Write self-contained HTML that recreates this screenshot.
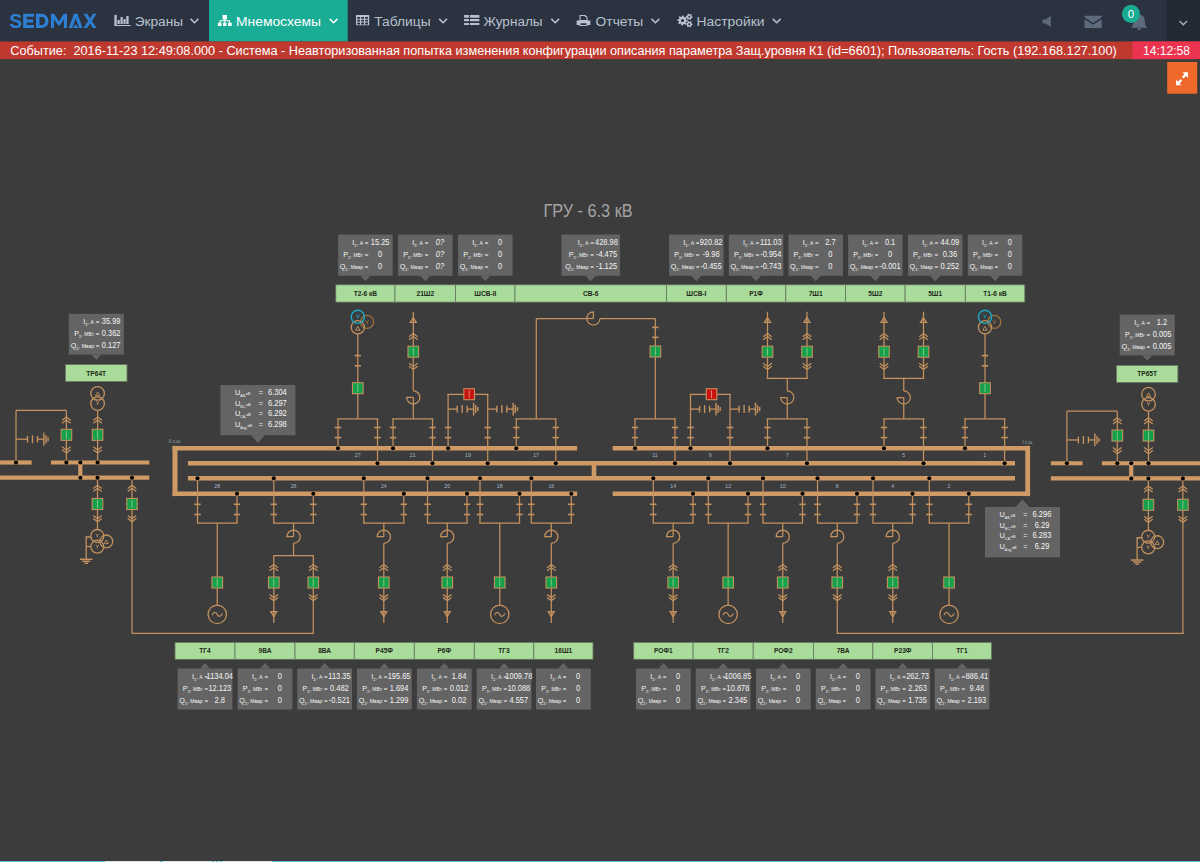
<!DOCTYPE html>
<html><head><meta charset="utf-8">
<style>
html,body{margin:0;padding:0;width:1200px;height:862px;overflow:hidden;background:#3c3c3c;}
svg#d{position:absolute;left:0;top:0;}
</style></head><body>
<svg id="d" width="1200" height="862" viewBox="0 0 1200 862" font-family="Liberation Sans, sans-serif">
<rect x="0" y="0" width="1200" height="41.5" fill="#2a333f"/>
<rect x="1166.5" y="0" width="33.5" height="41.5" fill="#232a35"/>
<rect x="209" y="0" width="138.7" height="41.5" fill="#1aad95"/>
<text x="9.4" y="28" font-size="19.4" font-weight="bold" fill="#2d7fd3" transform="translate(9.4,0) scale(0.97,1) translate(-9.4,0)">S</text>
<path d="M23.2,13.8 h10.8 v3 h-7.3 v2.8 h6.4 v2.8 h-6.4 v2.6 h7.3 v3 h-10.8 Z" fill="#2d7fd3"/>
<path fill-rule="evenodd" d="M36,13.8 h5.8 a6.8,7.1 0 0 1 0,14.2 h-5.8 Z M39.5,16.9 h2.2 a3.4,4 0 0 1 0,8 h-2.2 Z" fill="#2d7fd3"/>
<path d="M50.9,28 V13.8 h3.3 l4.8,7.8 l4.8,-7.8 h3.2 V28 h-3.1 V19.2 l-4.1,6.2 h-1.6 l-4.2,-6.2 V28 Z" fill="#2d7fd3"/>
<path d="M68.8,28 L74,13.8 h3.4 L82.6,28 h-3.5 L75.7,18.3 L72.3,28 Z M72.9,28 L75.7,24.2 L78.5,28 Z" fill="#2d7fd3"/>
<path d="M83.4,13.8 h3.7 l2.9,4.6 l2.9,-4.6 h3.6 l-4.7,7.1 l4.7,7.1 h-3.6 l-2.9,-4.6 l-2.9,4.6 h-3.7 l4.8,-7.1 Z" fill="#2d7fd3"/>
<text x="134.7" y="25.6" font-size="13.7" fill="#b9c2ce" textLength="48.3" lengthAdjust="spacingAndGlyphs">Экраны</text>
<polyline points="190.6,18.9 194.5,22.7 198.4,18.9" fill="none" stroke="#b9c2ce" stroke-width="1.5"/>
<text x="236" y="25.6" font-size="13.7" fill="#ffffff" textLength="85" lengthAdjust="spacingAndGlyphs">Мнемосхемы</text>
<polyline points="329.7,18.9 333.59999999999997,22.7 337.5,18.9" fill="none" stroke="#ffffff" stroke-width="1.5"/>
<text x="374.2" y="25.6" font-size="13.7" fill="#b9c2ce" textLength="56.4" lengthAdjust="spacingAndGlyphs">Таблицы</text>
<polyline points="439.2,18.9 443.09999999999997,22.7 447.0,18.9" fill="none" stroke="#b9c2ce" stroke-width="1.5"/>
<text x="483.4" y="25.6" font-size="13.7" fill="#b9c2ce" textLength="59.2" lengthAdjust="spacingAndGlyphs">Журналы</text>
<polyline points="551.3,18.9 555.1999999999999,22.7 559.0999999999999,18.9" fill="none" stroke="#b9c2ce" stroke-width="1.5"/>
<text x="595.6" y="25.6" font-size="13.7" fill="#b9c2ce" textLength="47.7" lengthAdjust="spacingAndGlyphs">Отчеты</text>
<polyline points="651.5,18.9 655.4,22.7 659.3,18.9" fill="none" stroke="#b9c2ce" stroke-width="1.5"/>
<text x="696.6" y="25.6" font-size="13.7" fill="#b9c2ce" textLength="68" lengthAdjust="spacingAndGlyphs">Настройки</text>
<polyline points="772.8,18.9 776.6999999999999,22.7 780.5999999999999,18.9" fill="none" stroke="#b9c2ce" stroke-width="1.5"/>
<path d="M114.4,15 h2.3 v9.9 h14 v1.1 h-16.3 Z M117.5,20 h2.3 v4 h-2.3 Z M120.5,17 h2.2 v7 h-2.2 Z M123.5,19 h2.1 v5 h-2.1 Z M126.3,16 h2.3 v8 h-2.3 Z" fill="#b9c2ce"/>
<path d="M222.5,15.1 h4.5 v4.4 h-4.5 Z M224.3,19.5 h1 v1.3 h-1 Z M219.6,20.3 h10.3 v1 h-10.3 Z M219.6,20.3 h1 v2.5 h-1 Z M224.3,20.3 h1 v2.5 h-1 Z M228.9,20.3 h1 v2.5 h-1 Z M217.9,22.8 h3.6 v3.2 h-3.6 Z M223,22.8 h3.5 v3.2 h-3.5 Z M228.1,22.8 h3.6 v3.2 h-3.6 Z" fill="#ffffff"/>
<path fill-rule="evenodd" d="M356,14.9 h13.2 v10.35 h-13.2 Z M357.2,16.9 v1.8 h2.8 v-1.8 Z M361.2,16.9 v1.8 h2.8 v-1.8 Z M365.2,16.9 v1.8 h2.8 v-1.8 Z M357.2,19.8 v1.8 h2.8 v-1.8 Z M361.2,19.8 v1.8 h2.8 v-1.8 Z M365.2,19.8 v1.8 h2.8 v-1.8 Z M357.2,22.6 v1.8 h2.8 v-1.8 Z M361.2,22.6 v1.8 h2.8 v-1.8 Z M365.2,22.6 v1.8 h2.8 v-1.8 Z" fill="#b9c2ce"/>
<path d="M464.1,14.9 h4.8 v2.85 h-4.8 Z M469.9,14.9 h9.5 v2.85 h-9.5 Z M464.1,18.9 h4.8 v2.4 h-4.8 Z M469.9,18.9 h9.5 v2.4 h-9.5 Z M464.1,22.9 h4.8 v2.2 h-4.8 Z M469.9,22.9 h9.5 v2.2 h-9.5 Z" fill="#b9c2ce"/>
<path fill-rule="evenodd" d="M579.5,14.9 h6 l2,2 v3.6 h2.9 v4.5 h-2.9 v1 h-8 v-1 h-2.9 v-4.5 h2.9 Z M580.6,16 v4.1 h5.8 v-3 h-1.6 v-1.1 Z M580.6,23.3 v1.7 h5.8 v-1.7 Z" fill="#b9c2ce"/>
<path fill-rule="evenodd" d="M687.70,20.50 L687.60,21.51 L685.96,21.93 L685.61,22.58 L686.18,24.18 L685.39,24.82 L683.93,23.96 L683.23,24.17 L682.50,25.70 L681.49,25.60 L681.07,23.96 L680.42,23.61 L678.82,24.18 L678.18,23.39 L679.04,21.93 L678.83,21.23 L677.30,20.50 L677.40,19.49 L679.04,19.07 L679.39,18.42 L678.82,16.82 L679.61,16.18 L681.07,17.04 L681.77,16.83 L682.50,15.30 L683.51,15.40 L683.93,17.04 L684.58,17.39 L686.18,16.82 L686.82,17.61 L685.96,19.07 L686.17,19.77 Z M684.1,20.5 A1.6,1.6 0 1 0 680.9,20.5 A1.6,1.6 0 1 0 684.1,20.5 Z M692.60,16.80 L692.49,17.65 L691.36,17.99 L690.98,18.48 L690.95,19.66 L690.15,19.99 L689.30,19.18 L688.69,19.10 L687.65,19.66 L686.97,19.13 L687.24,17.99 L687.00,17.41 L686.00,16.80 L686.11,15.95 L687.24,15.61 L687.62,15.12 L687.65,13.94 L688.45,13.61 L689.30,14.42 L689.91,14.50 L690.95,13.94 L691.63,14.47 L691.36,15.61 L691.60,16.19 Z M690.3,16.8 A1.0,1.0 0 1 0 688.3,16.8 A1.0,1.0 0 1 0 690.3,16.8 Z M692.60,24.20 L692.49,25.05 L691.36,25.39 L690.98,25.88 L690.95,27.06 L690.15,27.39 L689.30,26.58 L688.69,26.50 L687.65,27.06 L686.97,26.53 L687.24,25.39 L687.00,24.81 L686.00,24.20 L686.11,23.35 L687.24,23.01 L687.62,22.52 L687.65,21.34 L688.45,21.01 L689.30,21.82 L689.91,21.90 L690.95,21.34 L691.63,21.87 L691.36,23.01 L691.60,23.59 Z M690.3,24.2 A1.0,1.0 0 1 0 688.3,24.2 A1.0,1.0 0 1 0 690.3,24.2 Z" fill="#b9c2ce"/>
<path d="M1042.6,19.5 h2.8 l5.4,-3.5 v11 l-5.4,-3.5 h-2.8 Z" fill="#5d6a7b"/>
<path d="M1084.5,15.7 h17.2 v1.6 l-8.6,5.6 l-8.6,-5.6 Z M1084.5,19.3 l8.6,5.4 l8.6,-5.4 v8.8 h-17.2 Z" fill="#5d6a7b"/>
<path d="M1139.2,14.6 c-3.6,0 -5.6,3 -5.6,6.5 c0,3.5 -1.2,5.4 -2.3,6.6 h15.8 c-1.1,-1.2 -2.3,-3.1 -2.3,-6.6 c0,-3.5 -2,-6.5 -5.6,-6.5 Z M1137.3,28.3 a1.9,1.9 0 0 0 3.8,0 Z" fill="#5d6a7b"/>
<circle cx="1131" cy="13.9" r="9.1" fill="#1aab93"/>
<text x="1131" y="18" font-size="11.5" fill="#ffffff" text-anchor="middle">0</text>
<polyline points="1179.6,21 1183.3,24.7 1187,21" fill="none" stroke="#aab4c2" stroke-width="1.4"/>
<rect x="0" y="41.5" width="1200" height="17.6" fill="#c0392f"/>
<rect x="1132.5" y="41.5" width="67.5" height="17.6" fill="#ec3350"/>
<text x="10.3" y="55.2" font-size="12.6" fill="#ffffff" textLength="1106.4" lengthAdjust="spacingAndGlyphs" xml:space="preserve">Событие:  2016-11-23 12:49:08.000 - Система - Неавторизованная попытка изменения конфигурации описания параметра Защ.уровня К1 (id=6601); Пользователь: Гость (192.168.127.100)</text>
<text x="1143" y="55.2" font-size="12.4" fill="#ffffff" textLength="47" lengthAdjust="spacingAndGlyphs">14:12:58</text>
<rect x="1167.2" y="62" width="30" height="31.7" fill="#f0692a"/>
<path d="M1182.5,72.3 h5.5 v5.5 l-1.9,-1.9 l-2.6,2.6 l-1.7,-1.7 l2.6,-2.6 Z M1181.5,85.3 h-5.5 v-5.5 l1.9,1.9 l2.6,-2.6 l1.7,1.7 l-2.6,2.6 Z" fill="#ffffff"/>
<rect x="0" y="861" width="1200" height="1" fill="#5bbfd6"/>
<rect x="105" y="861" width="55" height="1" fill="#d8e6ea"/>
<rect x="163" y="861" width="49" height="1" fill="#d8e6ea"/>
<rect x="214" y="861" width="2" height="1" fill="#d8e6ea"/>
<rect x="218" y="861" width="2" height="1" fill="#d8e6ea"/>
<rect x="222" y="861" width="50" height="1" fill="#d8e6ea"/>
<line x1="172.6" y1="448.2" x2="577.1" y2="448.2" stroke="#cf9a66" stroke-width="4.6"/>
<line x1="175" y1="445.9" x2="175" y2="496.1" stroke="#cf9a66" stroke-width="5"/>
<line x1="172.6" y1="493.8" x2="577.1" y2="493.8" stroke="#cf9a66" stroke-width="4.6"/>
<line x1="612.7" y1="448.2" x2="1030" y2="448.2" stroke="#cf9a66" stroke-width="4.6"/>
<line x1="1027.7" y1="445.9" x2="1027.7" y2="496.1" stroke="#cf9a66" stroke-width="4.8"/>
<line x1="612.7" y1="493.8" x2="1030" y2="493.8" stroke="#cf9a66" stroke-width="4.6"/>
<line x1="187.9" y1="463.3" x2="1015" y2="463.3" stroke="#cf9a66" stroke-width="4.6"/>
<line x1="187.9" y1="478.3" x2="1015" y2="478.3" stroke="#cf9a66" stroke-width="4.6"/>
<line x1="594" y1="463.3" x2="594" y2="478.3" stroke="#cf9a66" stroke-width="4.6"/>
<text x="175" y="443" font-size="4.6" fill="#9aa6b0" text-anchor="middle" font-weight="normal" font-style="normal">II с.ш.</text>
<text x="1028" y="443.5" font-size="4.6" fill="#9aa6b0" text-anchor="middle" font-weight="normal" font-style="normal">I с.ш.</text>
<line x1="338" y1="418.8" x2="338" y2="448.2" stroke="#c4915f" stroke-width="1.25"/>
<line x1="377.5" y1="418.8" x2="377.5" y2="463.3" stroke="#c4915f" stroke-width="1.25"/>
<line x1="337.3" y1="418.8" x2="378.2" y2="418.8" stroke="#c4915f" stroke-width="1.25"/>
<line x1="334.8" y1="427.5" x2="341.2" y2="427.5" stroke="#c4915f" stroke-width="1.6"/>
<line x1="374.3" y1="427.5" x2="380.7" y2="427.5" stroke="#c4915f" stroke-width="1.6"/>
<line x1="334.8" y1="437.6" x2="341.2" y2="437.6" stroke="#c4915f" stroke-width="1.6"/>
<line x1="374.3" y1="437.6" x2="380.7" y2="437.6" stroke="#c4915f" stroke-width="1.6"/>
<text x="357.75" y="456.8" font-size="5.2" fill="#a9b8c9" text-anchor="middle" font-weight="normal" font-style="normal">27</text>
<line x1="357.8" y1="333.9" x2="357.8" y2="418.8" stroke="#c4915f" stroke-width="1.25"/>
<line x1="354.6" y1="355.6" x2="361.0" y2="355.6" stroke="#c4915f" stroke-width="1.6"/>
<line x1="354.6" y1="365.8" x2="361.0" y2="365.8" stroke="#c4915f" stroke-width="1.6"/>
<rect x="352.5" y="382.7" width="10.6" height="11" fill="#15a04b" stroke="#c4915f" stroke-width="1.1"/>
<line x1="357.8" y1="384.2" x2="357.8" y2="392.2" stroke="#9fcf8a" stroke-width="0.8"/>
<circle cx="367.1" cy="321.9" r="6.5" fill="none" stroke="#9c703f" stroke-width="1.3"/>
<polyline points="365.40000000000003,320.47 367.1,322 368.8,320.47" fill="none" stroke="#9c703f" stroke-width="1.0"/>
<line x1="367.1" y1="322" x2="367.1" y2="323.87" stroke="#9c703f" stroke-width="1.0"/>
<circle cx="357.8" cy="327.3" r="6.6" fill="none" stroke="#c4915f" stroke-width="1.3"/>
<path d="M357.8,326.3 L360.1,330.3 L355.5,330.3 Z" fill="none" stroke="#c4915f" stroke-width="0.9"/>
<circle cx="357.8" cy="316.8" r="6.6" fill="none" stroke="#1ba8c6" stroke-width="1.4"/>
<polyline points="356.1,314.97 357.8,316.5 359.5,314.97" fill="none" stroke="#1ba8c6" stroke-width="1.0"/>
<line x1="357.8" y1="316.5" x2="357.8" y2="318.37" stroke="#1ba8c6" stroke-width="1.0"/>
<line x1="393" y1="418.8" x2="393" y2="448.2" stroke="#c4915f" stroke-width="1.25"/>
<line x1="432.5" y1="418.8" x2="432.5" y2="463.3" stroke="#c4915f" stroke-width="1.25"/>
<line x1="392.3" y1="418.8" x2="433.2" y2="418.8" stroke="#c4915f" stroke-width="1.25"/>
<line x1="389.8" y1="427.5" x2="396.2" y2="427.5" stroke="#c4915f" stroke-width="1.6"/>
<line x1="429.3" y1="427.5" x2="435.7" y2="427.5" stroke="#c4915f" stroke-width="1.6"/>
<line x1="389.8" y1="437.6" x2="396.2" y2="437.6" stroke="#c4915f" stroke-width="1.6"/>
<line x1="429.3" y1="437.6" x2="435.7" y2="437.6" stroke="#c4915f" stroke-width="1.6"/>
<text x="412.75" y="456.8" font-size="5.2" fill="#a9b8c9" text-anchor="middle" font-weight="normal" font-style="normal">21</text>
<path d="M413.3,390.79999999999995 A6.6,6.6 0 1 1 406.7,397.4 L413.3,397.4" fill="none" stroke="#c4915f" stroke-width="1.25"/>
<line x1="413.3" y1="397.4" x2="413.3" y2="418.8" stroke="#c4915f" stroke-width="1.25"/>
<line x1="413.3" y1="311.7" x2="413.3" y2="390.8" stroke="#c4915f" stroke-width="1.25"/>
<path d="M413.3,317.5 L416.40000000000003,322.5 L410.2,322.5 Z" fill="#c4915f" fill-opacity="0.35" stroke="#c4915f" stroke-width="1.2"/>
<polyline points="409.0,336.8 413.3,333.6 417.6,336.8" fill="none" stroke="#c4915f" stroke-width="1.3"/>
<polyline points="409.0,339.8 413.3,336.6 417.6,339.8" fill="none" stroke="#c4915f" stroke-width="1.3"/>
<rect x="408.0" y="346.2" width="10.6" height="11" fill="#15a04b" stroke="#c4915f" stroke-width="1.1"/>
<line x1="413.3" y1="347.7" x2="413.3" y2="355.7" stroke="#9fcf8a" stroke-width="0.8"/>
<polyline points="409.0,363.3 413.3,366.5 417.6,363.3" fill="none" stroke="#c4915f" stroke-width="1.3"/>
<polyline points="409.0,366.3 413.3,369.5 417.6,366.3" fill="none" stroke="#c4915f" stroke-width="1.3"/>
<line x1="448.1" y1="394.3" x2="448.1" y2="448.2" stroke="#c4915f" stroke-width="1.25"/>
<line x1="487.7" y1="394.3" x2="487.7" y2="463.3" stroke="#c4915f" stroke-width="1.25"/>
<line x1="447.40000000000003" y1="394.3" x2="488.4" y2="394.3" stroke="#c4915f" stroke-width="1.25"/>
<line x1="444.90000000000003" y1="427.5" x2="451.3" y2="427.5" stroke="#c4915f" stroke-width="1.6"/>
<line x1="484.5" y1="427.5" x2="490.9" y2="427.5" stroke="#c4915f" stroke-width="1.6"/>
<line x1="444.90000000000003" y1="437.6" x2="451.3" y2="437.6" stroke="#c4915f" stroke-width="1.6"/>
<line x1="484.5" y1="437.6" x2="490.9" y2="437.6" stroke="#c4915f" stroke-width="1.6"/>
<rect x="463.9" y="388.7" width="10.6" height="11" fill="#c8120f" stroke="#c4915f" stroke-width="1.1"/>
<line x1="469.2" y1="390.2" x2="469.2" y2="398.2" stroke="#e8a090" stroke-width="0.8"/>
<line x1="448.1" y1="409.1" x2="457.20000000000005" y2="409.1" stroke="#c4915f" stroke-width="1.3"/>
<line x1="457.20000000000005" y1="405.8" x2="457.20000000000005" y2="412.40000000000003" stroke="#c4915f" stroke-width="1.4"/>
<line x1="462.20000000000005" y1="405.1" x2="462.20000000000005" y2="413.1" stroke="#c4915f" stroke-width="1.4"/>
<line x1="467.20000000000005" y1="405.8" x2="467.20000000000005" y2="412.40000000000003" stroke="#c4915f" stroke-width="1.4"/>
<line x1="467.20000000000005" y1="409.1" x2="473.6" y2="409.1" stroke="#c4915f" stroke-width="1.3"/>
<line x1="473.6" y1="402.70000000000005" x2="473.6" y2="415.5" stroke="#c4915f" stroke-width="1.4"/>
<line x1="475.70000000000005" y1="405.1" x2="475.70000000000005" y2="413.1" stroke="#c4915f" stroke-width="1.4"/>
<line x1="477.8" y1="407.1" x2="477.8" y2="411.1" stroke="#c4915f" stroke-width="1.4"/>
<line x1="487.7" y1="409.1" x2="496.8" y2="409.1" stroke="#c4915f" stroke-width="1.3"/>
<line x1="496.8" y1="405.8" x2="496.8" y2="412.40000000000003" stroke="#c4915f" stroke-width="1.4"/>
<line x1="501.8" y1="405.1" x2="501.8" y2="413.1" stroke="#c4915f" stroke-width="1.4"/>
<line x1="506.8" y1="405.8" x2="506.8" y2="412.40000000000003" stroke="#c4915f" stroke-width="1.4"/>
<line x1="506.8" y1="409.1" x2="513.2" y2="409.1" stroke="#c4915f" stroke-width="1.3"/>
<line x1="513.2" y1="402.70000000000005" x2="513.2" y2="415.5" stroke="#c4915f" stroke-width="1.4"/>
<line x1="515.3" y1="405.1" x2="515.3" y2="413.1" stroke="#c4915f" stroke-width="1.4"/>
<line x1="517.4" y1="407.1" x2="517.4" y2="411.1" stroke="#c4915f" stroke-width="1.4"/>
<text x="467.9" y="456.8" font-size="5.2" fill="#a9b8c9" text-anchor="middle" font-weight="normal" font-style="normal">19</text>
<line x1="516.3" y1="418.8" x2="516.3" y2="448.2" stroke="#c4915f" stroke-width="1.25"/>
<line x1="555.8" y1="418.8" x2="555.8" y2="463.3" stroke="#c4915f" stroke-width="1.25"/>
<line x1="515.5999999999999" y1="418.8" x2="556.5" y2="418.8" stroke="#c4915f" stroke-width="1.25"/>
<line x1="513.0999999999999" y1="427.5" x2="519.5" y2="427.5" stroke="#c4915f" stroke-width="1.6"/>
<line x1="552.5999999999999" y1="427.5" x2="559.0" y2="427.5" stroke="#c4915f" stroke-width="1.6"/>
<line x1="513.0999999999999" y1="437.6" x2="519.5" y2="437.6" stroke="#c4915f" stroke-width="1.6"/>
<line x1="552.5999999999999" y1="437.6" x2="559.0" y2="437.6" stroke="#c4915f" stroke-width="1.6"/>
<text x="536.05" y="456.8" font-size="5.2" fill="#a9b8c9" text-anchor="middle" font-weight="normal" font-style="normal">17</text>
<line x1="536.3" y1="318.5" x2="536.3" y2="418.8" stroke="#c4915f" stroke-width="1.25"/>
<line x1="536.3" y1="318.5" x2="586.8" y2="318.5" stroke="#c4915f" stroke-width="1.25"/>
<path d="M600.0,318.5 A6.6,6.6 0 1 1 593.4,311.9 L593.4,318.5" fill="none" stroke="#c4915f" stroke-width="1.25"/>
<line x1="593.4" y1="318.5" x2="586.8" y2="318.5" stroke="#c4915f" stroke-width="1.25"/>
<line x1="600" y1="318.5" x2="655.3" y2="318.5" stroke="#c4915f" stroke-width="1.25"/>
<line x1="655.3" y1="318.5" x2="655.3" y2="418.8" stroke="#c4915f" stroke-width="1.25"/>
<line x1="652.0999999999999" y1="327.4" x2="658.5" y2="327.4" stroke="#c4915f" stroke-width="1.6"/>
<line x1="652.0999999999999" y1="337.4" x2="658.5" y2="337.4" stroke="#c4915f" stroke-width="1.6"/>
<rect x="650.1" y="346.0" width="10.6" height="11" fill="#15a04b" stroke="#c4915f" stroke-width="1.1"/>
<line x1="655.4" y1="347.5" x2="655.4" y2="355.5" stroke="#9fcf8a" stroke-width="0.8"/>
<line x1="635" y1="418.8" x2="635" y2="448.2" stroke="#c4915f" stroke-width="1.25"/>
<line x1="675" y1="418.8" x2="675" y2="463.3" stroke="#c4915f" stroke-width="1.25"/>
<line x1="634.3" y1="418.8" x2="675.7" y2="418.8" stroke="#c4915f" stroke-width="1.25"/>
<line x1="631.8" y1="427.5" x2="638.2" y2="427.5" stroke="#c4915f" stroke-width="1.6"/>
<line x1="671.8" y1="427.5" x2="678.2" y2="427.5" stroke="#c4915f" stroke-width="1.6"/>
<line x1="631.8" y1="437.6" x2="638.2" y2="437.6" stroke="#c4915f" stroke-width="1.6"/>
<line x1="671.8" y1="437.6" x2="678.2" y2="437.6" stroke="#c4915f" stroke-width="1.6"/>
<text x="655.0" y="456.8" font-size="5.2" fill="#a9b8c9" text-anchor="middle" font-weight="normal" font-style="normal">11</text>
<line x1="690.5" y1="394.3" x2="690.5" y2="448.2" stroke="#c4915f" stroke-width="1.25"/>
<line x1="730" y1="394.3" x2="730" y2="463.3" stroke="#c4915f" stroke-width="1.25"/>
<line x1="689.8" y1="394.3" x2="730.7" y2="394.3" stroke="#c4915f" stroke-width="1.25"/>
<line x1="687.3" y1="427.5" x2="693.7" y2="427.5" stroke="#c4915f" stroke-width="1.6"/>
<line x1="726.8" y1="427.5" x2="733.2" y2="427.5" stroke="#c4915f" stroke-width="1.6"/>
<line x1="687.3" y1="437.6" x2="693.7" y2="437.6" stroke="#c4915f" stroke-width="1.6"/>
<line x1="726.8" y1="437.6" x2="733.2" y2="437.6" stroke="#c4915f" stroke-width="1.6"/>
<rect x="706.25" y="388.7" width="10.6" height="11" fill="#c8120f" stroke="#c4915f" stroke-width="1.1"/>
<line x1="711.55" y1="390.2" x2="711.55" y2="398.2" stroke="#e8a090" stroke-width="0.8"/>
<line x1="690.5" y1="409.1" x2="699.6" y2="409.1" stroke="#c4915f" stroke-width="1.3"/>
<line x1="699.6" y1="405.8" x2="699.6" y2="412.40000000000003" stroke="#c4915f" stroke-width="1.4"/>
<line x1="704.6" y1="405.1" x2="704.6" y2="413.1" stroke="#c4915f" stroke-width="1.4"/>
<line x1="709.6" y1="405.8" x2="709.6" y2="412.40000000000003" stroke="#c4915f" stroke-width="1.4"/>
<line x1="709.6" y1="409.1" x2="716.0" y2="409.1" stroke="#c4915f" stroke-width="1.3"/>
<line x1="716.0" y1="402.70000000000005" x2="716.0" y2="415.5" stroke="#c4915f" stroke-width="1.4"/>
<line x1="718.1" y1="405.1" x2="718.1" y2="413.1" stroke="#c4915f" stroke-width="1.4"/>
<line x1="720.2" y1="407.1" x2="720.2" y2="411.1" stroke="#c4915f" stroke-width="1.4"/>
<line x1="730" y1="409.1" x2="739.1" y2="409.1" stroke="#c4915f" stroke-width="1.3"/>
<line x1="739.1" y1="405.8" x2="739.1" y2="412.40000000000003" stroke="#c4915f" stroke-width="1.4"/>
<line x1="744.1" y1="405.1" x2="744.1" y2="413.1" stroke="#c4915f" stroke-width="1.4"/>
<line x1="749.1" y1="405.8" x2="749.1" y2="412.40000000000003" stroke="#c4915f" stroke-width="1.4"/>
<line x1="749.1" y1="409.1" x2="755.5" y2="409.1" stroke="#c4915f" stroke-width="1.3"/>
<line x1="755.5" y1="402.70000000000005" x2="755.5" y2="415.5" stroke="#c4915f" stroke-width="1.4"/>
<line x1="757.6" y1="405.1" x2="757.6" y2="413.1" stroke="#c4915f" stroke-width="1.4"/>
<line x1="759.7" y1="407.1" x2="759.7" y2="411.1" stroke="#c4915f" stroke-width="1.4"/>
<text x="710.25" y="456.8" font-size="5.2" fill="#a9b8c9" text-anchor="middle" font-weight="normal" font-style="normal">9</text>
<line x1="767.5" y1="418.8" x2="767.5" y2="448.2" stroke="#c4915f" stroke-width="1.25"/>
<line x1="807" y1="418.8" x2="807" y2="463.3" stroke="#c4915f" stroke-width="1.25"/>
<line x1="766.8" y1="418.8" x2="807.7" y2="418.8" stroke="#c4915f" stroke-width="1.25"/>
<line x1="764.3" y1="427.5" x2="770.7" y2="427.5" stroke="#c4915f" stroke-width="1.6"/>
<line x1="803.8" y1="427.5" x2="810.2" y2="427.5" stroke="#c4915f" stroke-width="1.6"/>
<line x1="764.3" y1="437.6" x2="770.7" y2="437.6" stroke="#c4915f" stroke-width="1.6"/>
<line x1="803.8" y1="437.6" x2="810.2" y2="437.6" stroke="#c4915f" stroke-width="1.6"/>
<text x="787.25" y="456.8" font-size="5.2" fill="#a9b8c9" text-anchor="middle" font-weight="normal" font-style="normal">7</text>
<path d="M787.25,390.9 A6.6,6.6 0 1 1 780.65,397.5 L787.25,397.5" fill="none" stroke="#c4915f" stroke-width="1.25"/>
<line x1="787.25" y1="397.5" x2="787.25" y2="418.8" stroke="#c4915f" stroke-width="1.25"/>
<line x1="787.25" y1="378.3" x2="787.25" y2="390.9" stroke="#c4915f" stroke-width="1.25"/>
<line x1="766.8" y1="378.3" x2="807.7" y2="378.3" stroke="#c4915f" stroke-width="1.25"/>
<line x1="767.5" y1="311.7" x2="767.5" y2="378.3" stroke="#c4915f" stroke-width="1.25"/>
<path d="M767.5,317.5 L770.6,322.5 L764.4,322.5 Z" fill="#c4915f" fill-opacity="0.35" stroke="#c4915f" stroke-width="1.2"/>
<polyline points="763.2,336.8 767.5,333.6 771.8,336.8" fill="none" stroke="#c4915f" stroke-width="1.3"/>
<polyline points="763.2,339.8 767.5,336.6 771.8,339.8" fill="none" stroke="#c4915f" stroke-width="1.3"/>
<rect x="762.2" y="346.2" width="10.6" height="11" fill="#15a04b" stroke="#c4915f" stroke-width="1.1"/>
<line x1="767.5" y1="347.7" x2="767.5" y2="355.7" stroke="#9fcf8a" stroke-width="0.8"/>
<polyline points="763.2,363.3 767.5,366.5 771.8,363.3" fill="none" stroke="#c4915f" stroke-width="1.3"/>
<polyline points="763.2,366.3 767.5,369.5 771.8,366.3" fill="none" stroke="#c4915f" stroke-width="1.3"/>
<line x1="807" y1="311.7" x2="807" y2="378.3" stroke="#c4915f" stroke-width="1.25"/>
<path d="M807,317.5 L810.1,322.5 L803.9,322.5 Z" fill="#c4915f" fill-opacity="0.35" stroke="#c4915f" stroke-width="1.2"/>
<polyline points="802.7,336.8 807,333.6 811.3,336.8" fill="none" stroke="#c4915f" stroke-width="1.3"/>
<polyline points="802.7,339.8 807,336.6 811.3,339.8" fill="none" stroke="#c4915f" stroke-width="1.3"/>
<rect x="801.7" y="346.2" width="10.6" height="11" fill="#15a04b" stroke="#c4915f" stroke-width="1.1"/>
<line x1="807" y1="347.7" x2="807" y2="355.7" stroke="#9fcf8a" stroke-width="0.8"/>
<polyline points="802.7,363.3 807,366.5 811.3,363.3" fill="none" stroke="#c4915f" stroke-width="1.3"/>
<polyline points="802.7,366.3 807,369.5 811.3,366.3" fill="none" stroke="#c4915f" stroke-width="1.3"/>
<line x1="884" y1="418.8" x2="884" y2="448.2" stroke="#c4915f" stroke-width="1.25"/>
<line x1="923.5" y1="418.8" x2="923.5" y2="463.3" stroke="#c4915f" stroke-width="1.25"/>
<line x1="883.3" y1="418.8" x2="924.2" y2="418.8" stroke="#c4915f" stroke-width="1.25"/>
<line x1="880.8" y1="427.5" x2="887.2" y2="427.5" stroke="#c4915f" stroke-width="1.6"/>
<line x1="920.3" y1="427.5" x2="926.7" y2="427.5" stroke="#c4915f" stroke-width="1.6"/>
<line x1="880.8" y1="437.6" x2="887.2" y2="437.6" stroke="#c4915f" stroke-width="1.6"/>
<line x1="920.3" y1="437.6" x2="926.7" y2="437.6" stroke="#c4915f" stroke-width="1.6"/>
<text x="903.75" y="456.8" font-size="5.2" fill="#a9b8c9" text-anchor="middle" font-weight="normal" font-style="normal">5</text>
<path d="M903.75,390.9 A6.6,6.6 0 1 1 897.15,397.5 L903.75,397.5" fill="none" stroke="#c4915f" stroke-width="1.25"/>
<line x1="903.75" y1="397.5" x2="903.75" y2="418.8" stroke="#c4915f" stroke-width="1.25"/>
<line x1="903.75" y1="378.3" x2="903.75" y2="390.9" stroke="#c4915f" stroke-width="1.25"/>
<line x1="883.3" y1="378.3" x2="924.2" y2="378.3" stroke="#c4915f" stroke-width="1.25"/>
<line x1="884" y1="311.7" x2="884" y2="378.3" stroke="#c4915f" stroke-width="1.25"/>
<path d="M884,317.5 L887.1,322.5 L880.9,322.5 Z" fill="#c4915f" fill-opacity="0.35" stroke="#c4915f" stroke-width="1.2"/>
<polyline points="879.7,336.8 884,333.6 888.3,336.8" fill="none" stroke="#c4915f" stroke-width="1.3"/>
<polyline points="879.7,339.8 884,336.6 888.3,339.8" fill="none" stroke="#c4915f" stroke-width="1.3"/>
<rect x="878.7" y="346.2" width="10.6" height="11" fill="#15a04b" stroke="#c4915f" stroke-width="1.1"/>
<line x1="884" y1="347.7" x2="884" y2="355.7" stroke="#9fcf8a" stroke-width="0.8"/>
<polyline points="879.7,363.3 884,366.5 888.3,363.3" fill="none" stroke="#c4915f" stroke-width="1.3"/>
<polyline points="879.7,366.3 884,369.5 888.3,366.3" fill="none" stroke="#c4915f" stroke-width="1.3"/>
<line x1="923.5" y1="311.7" x2="923.5" y2="378.3" stroke="#c4915f" stroke-width="1.25"/>
<path d="M923.5,317.5 L926.6,322.5 L920.4,322.5 Z" fill="#c4915f" fill-opacity="0.35" stroke="#c4915f" stroke-width="1.2"/>
<polyline points="919.2,336.8 923.5,333.6 927.8,336.8" fill="none" stroke="#c4915f" stroke-width="1.3"/>
<polyline points="919.2,339.8 923.5,336.6 927.8,339.8" fill="none" stroke="#c4915f" stroke-width="1.3"/>
<rect x="918.2" y="346.2" width="10.6" height="11" fill="#15a04b" stroke="#c4915f" stroke-width="1.1"/>
<line x1="923.5" y1="347.7" x2="923.5" y2="355.7" stroke="#9fcf8a" stroke-width="0.8"/>
<polyline points="919.2,363.3 923.5,366.5 927.8,363.3" fill="none" stroke="#c4915f" stroke-width="1.3"/>
<polyline points="919.2,366.3 923.5,369.5 927.8,366.3" fill="none" stroke="#c4915f" stroke-width="1.3"/>
<line x1="965" y1="418.8" x2="965" y2="448.2" stroke="#c4915f" stroke-width="1.25"/>
<line x1="1004.6" y1="418.8" x2="1004.6" y2="463.3" stroke="#c4915f" stroke-width="1.25"/>
<line x1="964.3" y1="418.8" x2="1005.3000000000001" y2="418.8" stroke="#c4915f" stroke-width="1.25"/>
<line x1="961.8" y1="427.5" x2="968.2" y2="427.5" stroke="#c4915f" stroke-width="1.6"/>
<line x1="1001.4" y1="427.5" x2="1007.8000000000001" y2="427.5" stroke="#c4915f" stroke-width="1.6"/>
<line x1="961.8" y1="437.6" x2="968.2" y2="437.6" stroke="#c4915f" stroke-width="1.6"/>
<line x1="1001.4" y1="437.6" x2="1007.8000000000001" y2="437.6" stroke="#c4915f" stroke-width="1.6"/>
<text x="984.8" y="456.8" font-size="5.2" fill="#a9b8c9" text-anchor="middle" font-weight="normal" font-style="normal">1</text>
<line x1="985" y1="333.9" x2="985" y2="418.8" stroke="#c4915f" stroke-width="1.25"/>
<line x1="981.8" y1="355.6" x2="988.2" y2="355.6" stroke="#c4915f" stroke-width="1.6"/>
<line x1="981.8" y1="365.8" x2="988.2" y2="365.8" stroke="#c4915f" stroke-width="1.6"/>
<rect x="979.7" y="382.7" width="10.6" height="11" fill="#15a04b" stroke="#c4915f" stroke-width="1.1"/>
<line x1="985" y1="384.2" x2="985" y2="392.2" stroke="#9fcf8a" stroke-width="0.8"/>
<circle cx="994.3" cy="321.9" r="6.5" fill="none" stroke="#9c703f" stroke-width="1.3"/>
<polyline points="992.5999999999999,320.47 994.3,322 996.0,320.47" fill="none" stroke="#9c703f" stroke-width="1.0"/>
<line x1="994.3" y1="322" x2="994.3" y2="323.87" stroke="#9c703f" stroke-width="1.0"/>
<circle cx="985" cy="327.3" r="6.6" fill="none" stroke="#c4915f" stroke-width="1.3"/>
<path d="M985,326.3 L987.3,330.3 L982.7,330.3 Z" fill="none" stroke="#c4915f" stroke-width="0.9"/>
<circle cx="985" cy="316.8" r="6.6" fill="none" stroke="#1ba8c6" stroke-width="1.4"/>
<polyline points="983.3,314.97 985,316.5 986.7,314.97" fill="none" stroke="#1ba8c6" stroke-width="1.0"/>
<line x1="985" y1="316.5" x2="985" y2="318.37" stroke="#1ba8c6" stroke-width="1.0"/>
<line x1="197.5" y1="478.3" x2="197.5" y2="523.0" stroke="#c4915f" stroke-width="1.25"/>
<line x1="237" y1="493.8" x2="237" y2="523.0" stroke="#c4915f" stroke-width="1.25"/>
<line x1="196.8" y1="523.0" x2="237.7" y2="523.0" stroke="#c4915f" stroke-width="1.25"/>
<line x1="194.3" y1="504.3" x2="200.7" y2="504.3" stroke="#c4915f" stroke-width="1.6"/>
<line x1="233.8" y1="504.3" x2="240.2" y2="504.3" stroke="#c4915f" stroke-width="1.6"/>
<line x1="194.3" y1="514.5" x2="200.7" y2="514.5" stroke="#c4915f" stroke-width="1.6"/>
<line x1="233.8" y1="514.5" x2="240.2" y2="514.5" stroke="#c4915f" stroke-width="1.6"/>
<text x="217.25" y="488" font-size="5.2" fill="#a9b8c9" text-anchor="middle" font-weight="normal" font-style="normal">28</text>
<line x1="217.25" y1="523.0" x2="217.25" y2="605.2" stroke="#c4915f" stroke-width="1.25"/>
<rect x="211.95" y="577.0" width="10.6" height="11" fill="#15a04b" stroke="#c4915f" stroke-width="1.1"/>
<line x1="217.25" y1="578.5" x2="217.25" y2="586.5" stroke="#9fcf8a" stroke-width="0.8"/>
<circle cx="217.25" cy="614.4" r="9.2" fill="none" stroke="#c4915f" stroke-width="1.3"/>
<path d="M212.05,615.1999999999999 C214.05,611.1999999999999 216.25,612.1999999999999 217.25,614.4 C218.25,616.6 220.45,617.6 222.45,613.6" fill="none" stroke="#c4915f" stroke-width="1.2"/>
<line x1="273.8" y1="478.3" x2="273.8" y2="523.0" stroke="#c4915f" stroke-width="1.25"/>
<line x1="313.3" y1="493.8" x2="313.3" y2="523.0" stroke="#c4915f" stroke-width="1.25"/>
<line x1="273.1" y1="523.0" x2="314.0" y2="523.0" stroke="#c4915f" stroke-width="1.25"/>
<line x1="270.6" y1="504.3" x2="277.0" y2="504.3" stroke="#c4915f" stroke-width="1.6"/>
<line x1="310.1" y1="504.3" x2="316.5" y2="504.3" stroke="#c4915f" stroke-width="1.6"/>
<line x1="270.6" y1="514.5" x2="277.0" y2="514.5" stroke="#c4915f" stroke-width="1.6"/>
<line x1="310.1" y1="514.5" x2="316.5" y2="514.5" stroke="#c4915f" stroke-width="1.6"/>
<text x="293.55" y="488" font-size="5.2" fill="#a9b8c9" text-anchor="middle" font-weight="normal" font-style="normal">26</text>
<line x1="293.55" y1="523.0" x2="293.55" y2="536.7" stroke="#c4915f" stroke-width="1.25"/>
<path d="M293.55,536.7 L286.95,536.7 A6.6,6.6 0 1 1 293.55,543.3000000000001" fill="none" stroke="#c4915f" stroke-width="1.25"/>
<line x1="293.55" y1="543.3" x2="293.55" y2="555.5" stroke="#c4915f" stroke-width="1.25"/>
<line x1="273.1" y1="555.5" x2="314" y2="555.5" stroke="#c4915f" stroke-width="1.25"/>
<line x1="273.8" y1="555.5" x2="273.8" y2="623" stroke="#c4915f" stroke-width="1.25"/>
<polyline points="269.5,567.8000000000001 273.8,564.6 278.1,567.8000000000001" fill="none" stroke="#c4915f" stroke-width="1.3"/>
<polyline points="269.5,570.8000000000001 273.8,567.6 278.1,570.8000000000001" fill="none" stroke="#c4915f" stroke-width="1.3"/>
<rect x="268.5" y="577.0" width="10.6" height="11" fill="#15a04b" stroke="#c4915f" stroke-width="1.1"/>
<line x1="273.8" y1="578.5" x2="273.8" y2="586.5" stroke="#9fcf8a" stroke-width="0.8"/>
<polyline points="269.5,594.4 273.8,597.6 278.1,594.4" fill="none" stroke="#c4915f" stroke-width="1.3"/>
<polyline points="269.5,597.4 273.8,600.6 278.1,597.4" fill="none" stroke="#c4915f" stroke-width="1.3"/>
<path d="M273.8,616.8 L276.90000000000003,611.5999999999999 L270.7,611.5999999999999 Z" fill="#c4915f" fill-opacity="0.35" stroke="#c4915f" stroke-width="1.2"/>
<line x1="313.3" y1="555.5" x2="313.3" y2="633.4" stroke="#c4915f" stroke-width="1.25"/>
<polyline points="309.0,567.8000000000001 313.3,564.6 317.6,567.8000000000001" fill="none" stroke="#c4915f" stroke-width="1.3"/>
<polyline points="309.0,570.8000000000001 313.3,567.6 317.6,570.8000000000001" fill="none" stroke="#c4915f" stroke-width="1.3"/>
<rect x="308.0" y="577.0" width="10.6" height="11" fill="#15a04b" stroke="#c4915f" stroke-width="1.1"/>
<line x1="313.3" y1="578.5" x2="313.3" y2="586.5" stroke="#9fcf8a" stroke-width="0.8"/>
<polyline points="309.0,594.4 313.3,597.6 317.6,594.4" fill="none" stroke="#c4915f" stroke-width="1.3"/>
<polyline points="309.0,597.4 313.3,600.6 317.6,597.4" fill="none" stroke="#c4915f" stroke-width="1.3"/>
<line x1="363.8" y1="478.3" x2="363.8" y2="523.0" stroke="#c4915f" stroke-width="1.25"/>
<line x1="403.8" y1="493.8" x2="403.8" y2="523.0" stroke="#c4915f" stroke-width="1.25"/>
<line x1="363.1" y1="523.0" x2="404.5" y2="523.0" stroke="#c4915f" stroke-width="1.25"/>
<line x1="360.6" y1="504.3" x2="367.0" y2="504.3" stroke="#c4915f" stroke-width="1.6"/>
<line x1="400.6" y1="504.3" x2="407.0" y2="504.3" stroke="#c4915f" stroke-width="1.6"/>
<line x1="360.6" y1="514.5" x2="367.0" y2="514.5" stroke="#c4915f" stroke-width="1.6"/>
<line x1="400.6" y1="514.5" x2="407.0" y2="514.5" stroke="#c4915f" stroke-width="1.6"/>
<text x="383.8" y="488" font-size="5.2" fill="#a9b8c9" text-anchor="middle" font-weight="normal" font-style="normal">24</text>
<line x1="383.8" y1="523.0" x2="383.8" y2="536.7" stroke="#c4915f" stroke-width="1.25"/>
<path d="M383.8,536.7 L377.2,536.7 A6.6,6.6 0 1 1 383.8,543.3000000000001" fill="none" stroke="#c4915f" stroke-width="1.25"/>
<line x1="383.8" y1="543.3" x2="383.8" y2="623" stroke="#c4915f" stroke-width="1.25"/>
<polyline points="379.5,567.8000000000001 383.8,564.6 388.1,567.8000000000001" fill="none" stroke="#c4915f" stroke-width="1.3"/>
<polyline points="379.5,570.8000000000001 383.8,567.6 388.1,570.8000000000001" fill="none" stroke="#c4915f" stroke-width="1.3"/>
<rect x="378.5" y="577.0" width="10.6" height="11" fill="#15a04b" stroke="#c4915f" stroke-width="1.1"/>
<line x1="383.8" y1="578.5" x2="383.8" y2="586.5" stroke="#9fcf8a" stroke-width="0.8"/>
<polyline points="379.5,594.4 383.8,597.6 388.1,594.4" fill="none" stroke="#c4915f" stroke-width="1.3"/>
<polyline points="379.5,597.4 383.8,600.6 388.1,597.4" fill="none" stroke="#c4915f" stroke-width="1.3"/>
<path d="M383.8,616.8 L386.90000000000003,611.5999999999999 L380.7,611.5999999999999 Z" fill="#c4915f" fill-opacity="0.35" stroke="#c4915f" stroke-width="1.2"/>
<line x1="427.5" y1="478.3" x2="427.5" y2="523.0" stroke="#c4915f" stroke-width="1.25"/>
<line x1="467" y1="493.8" x2="467" y2="523.0" stroke="#c4915f" stroke-width="1.25"/>
<line x1="426.8" y1="523.0" x2="467.7" y2="523.0" stroke="#c4915f" stroke-width="1.25"/>
<line x1="424.3" y1="504.3" x2="430.7" y2="504.3" stroke="#c4915f" stroke-width="1.6"/>
<line x1="463.8" y1="504.3" x2="470.2" y2="504.3" stroke="#c4915f" stroke-width="1.6"/>
<line x1="424.3" y1="514.5" x2="430.7" y2="514.5" stroke="#c4915f" stroke-width="1.6"/>
<line x1="463.8" y1="514.5" x2="470.2" y2="514.5" stroke="#c4915f" stroke-width="1.6"/>
<text x="447.25" y="488" font-size="5.2" fill="#a9b8c9" text-anchor="middle" font-weight="normal" font-style="normal">20</text>
<line x1="447.25" y1="523.0" x2="447.25" y2="536.7" stroke="#c4915f" stroke-width="1.25"/>
<path d="M447.25,536.7 L440.65,536.7 A6.6,6.6 0 1 1 447.25,543.3000000000001" fill="none" stroke="#c4915f" stroke-width="1.25"/>
<line x1="447.25" y1="543.3" x2="447.25" y2="623" stroke="#c4915f" stroke-width="1.25"/>
<polyline points="442.95,567.8000000000001 447.25,564.6 451.55,567.8000000000001" fill="none" stroke="#c4915f" stroke-width="1.3"/>
<polyline points="442.95,570.8000000000001 447.25,567.6 451.55,570.8000000000001" fill="none" stroke="#c4915f" stroke-width="1.3"/>
<rect x="441.95" y="577.0" width="10.6" height="11" fill="#15a04b" stroke="#c4915f" stroke-width="1.1"/>
<line x1="447.25" y1="578.5" x2="447.25" y2="586.5" stroke="#9fcf8a" stroke-width="0.8"/>
<polyline points="442.95,594.4 447.25,597.6 451.55,594.4" fill="none" stroke="#c4915f" stroke-width="1.3"/>
<polyline points="442.95,597.4 447.25,600.6 451.55,597.4" fill="none" stroke="#c4915f" stroke-width="1.3"/>
<path d="M447.25,616.8 L450.35,611.5999999999999 L444.15,611.5999999999999 Z" fill="#c4915f" fill-opacity="0.35" stroke="#c4915f" stroke-width="1.2"/>
<line x1="480" y1="478.3" x2="480" y2="523.0" stroke="#c4915f" stroke-width="1.25"/>
<line x1="519.5" y1="493.8" x2="519.5" y2="523.0" stroke="#c4915f" stroke-width="1.25"/>
<line x1="479.3" y1="523.0" x2="520.2" y2="523.0" stroke="#c4915f" stroke-width="1.25"/>
<line x1="476.8" y1="504.3" x2="483.2" y2="504.3" stroke="#c4915f" stroke-width="1.6"/>
<line x1="516.3" y1="504.3" x2="522.7" y2="504.3" stroke="#c4915f" stroke-width="1.6"/>
<line x1="476.8" y1="514.5" x2="483.2" y2="514.5" stroke="#c4915f" stroke-width="1.6"/>
<line x1="516.3" y1="514.5" x2="522.7" y2="514.5" stroke="#c4915f" stroke-width="1.6"/>
<text x="499.75" y="488" font-size="5.2" fill="#a9b8c9" text-anchor="middle" font-weight="normal" font-style="normal">18</text>
<line x1="499.75" y1="523.0" x2="499.75" y2="605.2" stroke="#c4915f" stroke-width="1.25"/>
<rect x="494.45" y="577.0" width="10.6" height="11" fill="#15a04b" stroke="#c4915f" stroke-width="1.1"/>
<line x1="499.75" y1="578.5" x2="499.75" y2="586.5" stroke="#9fcf8a" stroke-width="0.8"/>
<circle cx="499.75" cy="614.4" r="9.2" fill="none" stroke="#c4915f" stroke-width="1.3"/>
<path d="M494.55,615.1999999999999 C496.55,611.1999999999999 498.75,612.1999999999999 499.75,614.4 C500.75,616.6 502.95,617.6 504.95,613.6" fill="none" stroke="#c4915f" stroke-width="1.2"/>
<line x1="531.3" y1="478.3" x2="531.3" y2="523.0" stroke="#c4915f" stroke-width="1.25"/>
<line x1="571.3" y1="493.8" x2="571.3" y2="523.0" stroke="#c4915f" stroke-width="1.25"/>
<line x1="530.5999999999999" y1="523.0" x2="572.0" y2="523.0" stroke="#c4915f" stroke-width="1.25"/>
<line x1="528.0999999999999" y1="504.3" x2="534.5" y2="504.3" stroke="#c4915f" stroke-width="1.6"/>
<line x1="568.0999999999999" y1="504.3" x2="574.5" y2="504.3" stroke="#c4915f" stroke-width="1.6"/>
<line x1="528.0999999999999" y1="514.5" x2="534.5" y2="514.5" stroke="#c4915f" stroke-width="1.6"/>
<line x1="568.0999999999999" y1="514.5" x2="574.5" y2="514.5" stroke="#c4915f" stroke-width="1.6"/>
<text x="551.3" y="488" font-size="5.2" fill="#a9b8c9" text-anchor="middle" font-weight="normal" font-style="normal">16</text>
<line x1="551.3" y1="523.0" x2="551.3" y2="536.7" stroke="#c4915f" stroke-width="1.25"/>
<path d="M551.3,536.7 L544.6999999999999,536.7 A6.6,6.6 0 1 1 551.3,543.3000000000001" fill="none" stroke="#c4915f" stroke-width="1.25"/>
<line x1="551.3" y1="543.3" x2="551.3" y2="623" stroke="#c4915f" stroke-width="1.25"/>
<polyline points="547.0,567.8000000000001 551.3,564.6 555.5999999999999,567.8000000000001" fill="none" stroke="#c4915f" stroke-width="1.3"/>
<polyline points="547.0,570.8000000000001 551.3,567.6 555.5999999999999,570.8000000000001" fill="none" stroke="#c4915f" stroke-width="1.3"/>
<rect x="546.0" y="577.0" width="10.6" height="11" fill="#15a04b" stroke="#c4915f" stroke-width="1.1"/>
<line x1="551.3" y1="578.5" x2="551.3" y2="586.5" stroke="#9fcf8a" stroke-width="0.8"/>
<polyline points="547.0,594.4 551.3,597.6 555.5999999999999,594.4" fill="none" stroke="#c4915f" stroke-width="1.3"/>
<polyline points="547.0,597.4 551.3,600.6 555.5999999999999,597.4" fill="none" stroke="#c4915f" stroke-width="1.3"/>
<path d="M551.3,616.8 L554.4,611.5999999999999 L548.1999999999999,611.5999999999999 Z" fill="#c4915f" fill-opacity="0.35" stroke="#c4915f" stroke-width="1.2"/>
<line x1="653.3" y1="478.3" x2="653.3" y2="523.0" stroke="#c4915f" stroke-width="1.25"/>
<line x1="693" y1="493.8" x2="693" y2="523.0" stroke="#c4915f" stroke-width="1.25"/>
<line x1="652.5999999999999" y1="523.0" x2="693.7" y2="523.0" stroke="#c4915f" stroke-width="1.25"/>
<line x1="650.0999999999999" y1="504.3" x2="656.5" y2="504.3" stroke="#c4915f" stroke-width="1.6"/>
<line x1="689.8" y1="504.3" x2="696.2" y2="504.3" stroke="#c4915f" stroke-width="1.6"/>
<line x1="650.0999999999999" y1="514.5" x2="656.5" y2="514.5" stroke="#c4915f" stroke-width="1.6"/>
<line x1="689.8" y1="514.5" x2="696.2" y2="514.5" stroke="#c4915f" stroke-width="1.6"/>
<text x="673.15" y="488" font-size="5.2" fill="#a9b8c9" text-anchor="middle" font-weight="normal" font-style="normal">14</text>
<line x1="673.15" y1="523.0" x2="673.15" y2="536.7" stroke="#c4915f" stroke-width="1.25"/>
<path d="M673.15,536.7 L666.55,536.7 A6.6,6.6 0 1 1 673.15,543.3000000000001" fill="none" stroke="#c4915f" stroke-width="1.25"/>
<line x1="673.15" y1="543.3" x2="673.15" y2="623" stroke="#c4915f" stroke-width="1.25"/>
<polyline points="668.85,567.8000000000001 673.15,564.6 677.4499999999999,567.8000000000001" fill="none" stroke="#c4915f" stroke-width="1.3"/>
<polyline points="668.85,570.8000000000001 673.15,567.6 677.4499999999999,570.8000000000001" fill="none" stroke="#c4915f" stroke-width="1.3"/>
<rect x="667.85" y="577.0" width="10.6" height="11" fill="#15a04b" stroke="#c4915f" stroke-width="1.1"/>
<line x1="673.15" y1="578.5" x2="673.15" y2="586.5" stroke="#9fcf8a" stroke-width="0.8"/>
<polyline points="668.85,594.4 673.15,597.6 677.4499999999999,594.4" fill="none" stroke="#c4915f" stroke-width="1.3"/>
<polyline points="668.85,597.4 673.15,600.6 677.4499999999999,597.4" fill="none" stroke="#c4915f" stroke-width="1.3"/>
<path d="M673.15,616.8 L676.25,611.5999999999999 L670.05,611.5999999999999 Z" fill="#c4915f" fill-opacity="0.35" stroke="#c4915f" stroke-width="1.2"/>
<line x1="708.3" y1="478.3" x2="708.3" y2="523.0" stroke="#c4915f" stroke-width="1.25"/>
<line x1="748" y1="493.8" x2="748" y2="523.0" stroke="#c4915f" stroke-width="1.25"/>
<line x1="707.5999999999999" y1="523.0" x2="748.7" y2="523.0" stroke="#c4915f" stroke-width="1.25"/>
<line x1="705.0999999999999" y1="504.3" x2="711.5" y2="504.3" stroke="#c4915f" stroke-width="1.6"/>
<line x1="744.8" y1="504.3" x2="751.2" y2="504.3" stroke="#c4915f" stroke-width="1.6"/>
<line x1="705.0999999999999" y1="514.5" x2="711.5" y2="514.5" stroke="#c4915f" stroke-width="1.6"/>
<line x1="744.8" y1="514.5" x2="751.2" y2="514.5" stroke="#c4915f" stroke-width="1.6"/>
<text x="728.15" y="488" font-size="5.2" fill="#a9b8c9" text-anchor="middle" font-weight="normal" font-style="normal">12</text>
<line x1="728.15" y1="523.0" x2="728.15" y2="605.2" stroke="#c4915f" stroke-width="1.25"/>
<rect x="722.85" y="577.0" width="10.6" height="11" fill="#15a04b" stroke="#c4915f" stroke-width="1.1"/>
<line x1="728.15" y1="578.5" x2="728.15" y2="586.5" stroke="#9fcf8a" stroke-width="0.8"/>
<circle cx="728.15" cy="614.4" r="9.2" fill="none" stroke="#c4915f" stroke-width="1.3"/>
<path d="M722.9499999999999,615.1999999999999 C724.9499999999999,611.1999999999999 727.15,612.1999999999999 728.15,614.4 C729.15,616.6 731.35,617.6 733.35,613.6" fill="none" stroke="#c4915f" stroke-width="1.2"/>
<line x1="763" y1="478.3" x2="763" y2="523.0" stroke="#c4915f" stroke-width="1.25"/>
<line x1="802.5" y1="493.8" x2="802.5" y2="523.0" stroke="#c4915f" stroke-width="1.25"/>
<line x1="762.3" y1="523.0" x2="803.2" y2="523.0" stroke="#c4915f" stroke-width="1.25"/>
<line x1="759.8" y1="504.3" x2="766.2" y2="504.3" stroke="#c4915f" stroke-width="1.6"/>
<line x1="799.3" y1="504.3" x2="805.7" y2="504.3" stroke="#c4915f" stroke-width="1.6"/>
<line x1="759.8" y1="514.5" x2="766.2" y2="514.5" stroke="#c4915f" stroke-width="1.6"/>
<line x1="799.3" y1="514.5" x2="805.7" y2="514.5" stroke="#c4915f" stroke-width="1.6"/>
<text x="782.75" y="488" font-size="5.2" fill="#a9b8c9" text-anchor="middle" font-weight="normal" font-style="normal">10</text>
<line x1="782.75" y1="523.0" x2="782.75" y2="536.7" stroke="#c4915f" stroke-width="1.25"/>
<path d="M782.75,536.7 L776.15,536.7 A6.6,6.6 0 1 1 782.75,543.3000000000001" fill="none" stroke="#c4915f" stroke-width="1.25"/>
<line x1="782.75" y1="543.3" x2="782.75" y2="623" stroke="#c4915f" stroke-width="1.25"/>
<polyline points="778.45,567.8000000000001 782.75,564.6 787.05,567.8000000000001" fill="none" stroke="#c4915f" stroke-width="1.3"/>
<polyline points="778.45,570.8000000000001 782.75,567.6 787.05,570.8000000000001" fill="none" stroke="#c4915f" stroke-width="1.3"/>
<rect x="777.45" y="577.0" width="10.6" height="11" fill="#15a04b" stroke="#c4915f" stroke-width="1.1"/>
<line x1="782.75" y1="578.5" x2="782.75" y2="586.5" stroke="#9fcf8a" stroke-width="0.8"/>
<polyline points="778.45,594.4 782.75,597.6 787.05,594.4" fill="none" stroke="#c4915f" stroke-width="1.3"/>
<polyline points="778.45,597.4 782.75,600.6 787.05,597.4" fill="none" stroke="#c4915f" stroke-width="1.3"/>
<path d="M782.75,616.8 L785.85,611.5999999999999 L779.65,611.5999999999999 Z" fill="#c4915f" fill-opacity="0.35" stroke="#c4915f" stroke-width="1.2"/>
<line x1="817.5" y1="478.3" x2="817.5" y2="523.0" stroke="#c4915f" stroke-width="1.25"/>
<line x1="857" y1="493.8" x2="857" y2="523.0" stroke="#c4915f" stroke-width="1.25"/>
<line x1="816.8" y1="523.0" x2="857.7" y2="523.0" stroke="#c4915f" stroke-width="1.25"/>
<line x1="814.3" y1="504.3" x2="820.7" y2="504.3" stroke="#c4915f" stroke-width="1.6"/>
<line x1="853.8" y1="504.3" x2="860.2" y2="504.3" stroke="#c4915f" stroke-width="1.6"/>
<line x1="814.3" y1="514.5" x2="820.7" y2="514.5" stroke="#c4915f" stroke-width="1.6"/>
<line x1="853.8" y1="514.5" x2="860.2" y2="514.5" stroke="#c4915f" stroke-width="1.6"/>
<text x="837.25" y="488" font-size="5.2" fill="#a9b8c9" text-anchor="middle" font-weight="normal" font-style="normal">8</text>
<line x1="837.25" y1="523.0" x2="837.25" y2="536.7" stroke="#c4915f" stroke-width="1.25"/>
<path d="M837.25,536.7 L830.65,536.7 A6.6,6.6 0 1 1 837.25,543.3000000000001" fill="none" stroke="#c4915f" stroke-width="1.25"/>
<line x1="837.25" y1="543.3" x2="837.25" y2="633.4" stroke="#c4915f" stroke-width="1.25"/>
<polyline points="832.95,567.8000000000001 837.25,564.6 841.55,567.8000000000001" fill="none" stroke="#c4915f" stroke-width="1.3"/>
<polyline points="832.95,570.8000000000001 837.25,567.6 841.55,570.8000000000001" fill="none" stroke="#c4915f" stroke-width="1.3"/>
<rect x="831.95" y="577.0" width="10.6" height="11" fill="#15a04b" stroke="#c4915f" stroke-width="1.1"/>
<line x1="837.25" y1="578.5" x2="837.25" y2="586.5" stroke="#9fcf8a" stroke-width="0.8"/>
<polyline points="832.95,594.4 837.25,597.6 841.55,594.4" fill="none" stroke="#c4915f" stroke-width="1.3"/>
<polyline points="832.95,597.4 837.25,600.6 841.55,597.4" fill="none" stroke="#c4915f" stroke-width="1.3"/>
<line x1="873" y1="478.3" x2="873" y2="523.0" stroke="#c4915f" stroke-width="1.25"/>
<line x1="912.5" y1="493.8" x2="912.5" y2="523.0" stroke="#c4915f" stroke-width="1.25"/>
<line x1="872.3" y1="523.0" x2="913.2" y2="523.0" stroke="#c4915f" stroke-width="1.25"/>
<line x1="869.8" y1="504.3" x2="876.2" y2="504.3" stroke="#c4915f" stroke-width="1.6"/>
<line x1="909.3" y1="504.3" x2="915.7" y2="504.3" stroke="#c4915f" stroke-width="1.6"/>
<line x1="869.8" y1="514.5" x2="876.2" y2="514.5" stroke="#c4915f" stroke-width="1.6"/>
<line x1="909.3" y1="514.5" x2="915.7" y2="514.5" stroke="#c4915f" stroke-width="1.6"/>
<text x="892.75" y="488" font-size="5.2" fill="#a9b8c9" text-anchor="middle" font-weight="normal" font-style="normal">4</text>
<line x1="892.75" y1="523.0" x2="892.75" y2="536.7" stroke="#c4915f" stroke-width="1.25"/>
<path d="M892.75,536.7 L886.15,536.7 A6.6,6.6 0 1 1 892.75,543.3000000000001" fill="none" stroke="#c4915f" stroke-width="1.25"/>
<line x1="892.75" y1="543.3" x2="892.75" y2="623" stroke="#c4915f" stroke-width="1.25"/>
<polyline points="888.45,567.8000000000001 892.75,564.6 897.05,567.8000000000001" fill="none" stroke="#c4915f" stroke-width="1.3"/>
<polyline points="888.45,570.8000000000001 892.75,567.6 897.05,570.8000000000001" fill="none" stroke="#c4915f" stroke-width="1.3"/>
<rect x="887.45" y="577.0" width="10.6" height="11" fill="#15a04b" stroke="#c4915f" stroke-width="1.1"/>
<line x1="892.75" y1="578.5" x2="892.75" y2="586.5" stroke="#9fcf8a" stroke-width="0.8"/>
<polyline points="888.45,594.4 892.75,597.6 897.05,594.4" fill="none" stroke="#c4915f" stroke-width="1.3"/>
<polyline points="888.45,597.4 892.75,600.6 897.05,597.4" fill="none" stroke="#c4915f" stroke-width="1.3"/>
<path d="M892.75,616.8 L895.85,611.5999999999999 L889.65,611.5999999999999 Z" fill="#c4915f" fill-opacity="0.35" stroke="#c4915f" stroke-width="1.2"/>
<line x1="929.3" y1="478.3" x2="929.3" y2="523.0" stroke="#c4915f" stroke-width="1.25"/>
<line x1="968.8" y1="493.8" x2="968.8" y2="523.0" stroke="#c4915f" stroke-width="1.25"/>
<line x1="928.5999999999999" y1="523.0" x2="969.5" y2="523.0" stroke="#c4915f" stroke-width="1.25"/>
<line x1="926.0999999999999" y1="504.3" x2="932.5" y2="504.3" stroke="#c4915f" stroke-width="1.6"/>
<line x1="965.5999999999999" y1="504.3" x2="972.0" y2="504.3" stroke="#c4915f" stroke-width="1.6"/>
<line x1="926.0999999999999" y1="514.5" x2="932.5" y2="514.5" stroke="#c4915f" stroke-width="1.6"/>
<line x1="965.5999999999999" y1="514.5" x2="972.0" y2="514.5" stroke="#c4915f" stroke-width="1.6"/>
<text x="949.05" y="488" font-size="5.2" fill="#a9b8c9" text-anchor="middle" font-weight="normal" font-style="normal">2</text>
<line x1="949.05" y1="523.0" x2="949.05" y2="605.2" stroke="#c4915f" stroke-width="1.25"/>
<rect x="943.75" y="577.0" width="10.6" height="11" fill="#15a04b" stroke="#c4915f" stroke-width="1.1"/>
<line x1="949.05" y1="578.5" x2="949.05" y2="586.5" stroke="#9fcf8a" stroke-width="0.8"/>
<circle cx="949.05" cy="614.4" r="9.2" fill="none" stroke="#c4915f" stroke-width="1.3"/>
<path d="M943.8499999999999,615.1999999999999 C945.8499999999999,611.1999999999999 948.05,612.1999999999999 949.05,614.4 C950.05,616.6 952.25,617.6 954.25,613.6" fill="none" stroke="#c4915f" stroke-width="1.2"/>
<g transform="translate(0,0)">
<line x1="0" y1="462.5" x2="31.6" y2="462.5" stroke="#cf9a66" stroke-width="4.2"/>
<line x1="51" y1="462.5" x2="149.3" y2="462.5" stroke="#cf9a66" stroke-width="4.2"/>
<line x1="0" y1="477.7" x2="149.3" y2="477.7" stroke="#cf9a66" stroke-width="4.2"/>
<line x1="80.3" y1="462.5" x2="80.3" y2="477.7" stroke="#cf9a66" stroke-width="4.2"/>
<line x1="16" y1="410.4" x2="16" y2="462.5" stroke="#c4915f" stroke-width="1.25"/>
<line x1="16" y1="410.4" x2="66.4" y2="410.4" stroke="#c4915f" stroke-width="1.25"/>
<line x1="66.4" y1="410.4" x2="66.4" y2="462.5" stroke="#c4915f" stroke-width="1.25"/>
<line x1="15.999999999999998" y1="439.2" x2="27.5" y2="439.2" stroke="#c4915f" stroke-width="1.3"/>
<line x1="27.5" y1="435.9" x2="27.5" y2="442.5" stroke="#c4915f" stroke-width="1.4"/>
<line x1="32.5" y1="435.2" x2="32.5" y2="443.2" stroke="#c4915f" stroke-width="1.4"/>
<line x1="37.5" y1="435.9" x2="37.5" y2="442.5" stroke="#c4915f" stroke-width="1.4"/>
<line x1="37.5" y1="439.2" x2="43.9" y2="439.2" stroke="#c4915f" stroke-width="1.3"/>
<line x1="43.9" y1="432.8" x2="43.9" y2="445.59999999999997" stroke="#c4915f" stroke-width="1.4"/>
<line x1="46.0" y1="435.2" x2="46.0" y2="443.2" stroke="#c4915f" stroke-width="1.4"/>
<line x1="48.099999999999994" y1="437.2" x2="48.099999999999994" y2="441.2" stroke="#c4915f" stroke-width="1.4"/>
<polyline points="62.10000000000001,420.2 66.4,417 70.7,420.2" fill="none" stroke="#c4915f" stroke-width="1.3"/>
<polyline points="62.10000000000001,423.2 66.4,420 70.7,423.2" fill="none" stroke="#c4915f" stroke-width="1.3"/>
<rect x="61.10000000000001" y="429.3" width="10.6" height="11" fill="#15a04b" stroke="#c4915f" stroke-width="1.1"/>
<line x1="66.4" y1="430.8" x2="66.4" y2="438.8" stroke="#9fcf8a" stroke-width="0.8"/>
<polyline points="62.10000000000001,446.8 66.4,450 70.7,446.8" fill="none" stroke="#c4915f" stroke-width="1.3"/>
<polyline points="62.10000000000001,449.8 66.4,453 70.7,449.8" fill="none" stroke="#c4915f" stroke-width="1.3"/>
<line x1="97.6" y1="410.5" x2="97.6" y2="462.5" stroke="#c4915f" stroke-width="1.25"/>
<polyline points="93.3,420.2 97.6,417 101.89999999999999,420.2" fill="none" stroke="#c4915f" stroke-width="1.3"/>
<polyline points="93.3,423.2 97.6,420 101.89999999999999,423.2" fill="none" stroke="#c4915f" stroke-width="1.3"/>
<rect x="92.3" y="429.3" width="10.6" height="11" fill="#15a04b" stroke="#c4915f" stroke-width="1.1"/>
<line x1="97.6" y1="430.8" x2="97.6" y2="438.8" stroke="#9fcf8a" stroke-width="0.8"/>
<polyline points="93.3,446.8 97.6,450 101.89999999999999,446.8" fill="none" stroke="#c4915f" stroke-width="1.3"/>
<polyline points="93.3,449.8 97.6,453 101.89999999999999,449.8" fill="none" stroke="#c4915f" stroke-width="1.3"/>
<circle cx="97.6" cy="393.4" r="6.8" fill="none" stroke="#c4915f" stroke-width="1.3"/>
<path d="M97.6,392.02 L99.66999999999999,395.62 L95.53,395.62 Z" fill="none" stroke="#c4915f" stroke-width="0.9"/>
<circle cx="97.6" cy="403.6" r="6.8" fill="none" stroke="#c4915f" stroke-width="1.3"/>
<polyline points="96.07,401.623 97.6,403 99.13,401.623" fill="none" stroke="#c4915f" stroke-width="1.0"/>
<line x1="97.6" y1="403" x2="97.6" y2="404.683" stroke="#c4915f" stroke-width="1.0"/>
<line x1="97.5" y1="477.7" x2="97.5" y2="529.5" stroke="#c4915f" stroke-width="1.25"/>
<polyline points="93.2,488.4 97.5,485.2 101.8,488.4" fill="none" stroke="#c4915f" stroke-width="1.3"/>
<polyline points="93.2,491.4 97.5,488.2 101.8,491.4" fill="none" stroke="#c4915f" stroke-width="1.3"/>
<rect x="92.2" y="498.5" width="10.6" height="11" fill="#15a04b" stroke="#c4915f" stroke-width="1.1"/>
<line x1="97.5" y1="500" x2="97.5" y2="508" stroke="#9fcf8a" stroke-width="0.8"/>
<polyline points="93.2,515.4 97.5,518.6 101.8,515.4" fill="none" stroke="#c4915f" stroke-width="1.3"/>
<polyline points="93.2,518.4 97.5,521.6 101.8,518.4" fill="none" stroke="#c4915f" stroke-width="1.3"/>
<circle cx="97.3" cy="536" r="6.5" fill="none" stroke="#c4915f" stroke-width="1.3"/>
<polyline points="95.77,534.123 97.3,535.5 98.83,534.123" fill="none" stroke="#c4915f" stroke-width="1.0"/>
<line x1="97.3" y1="535.5" x2="97.3" y2="537.183" stroke="#c4915f" stroke-width="1.0"/>
<circle cx="106.3" cy="541.4" r="6.4" fill="none" stroke="#c4915f" stroke-width="1.3"/>
<path d="M106.3,540.02 L108.36999999999999,543.62 L104.23,543.62 Z" fill="none" stroke="#c4915f" stroke-width="0.9"/>
<circle cx="97.3" cy="546.7" r="6.5" fill="none" stroke="#c4915f" stroke-width="1.3"/>
<polyline points="95.77,545.123 97.3,546.5 98.83,545.123" fill="none" stroke="#c4915f" stroke-width="1.0"/>
<line x1="97.3" y1="546.5" x2="97.3" y2="548.183" stroke="#c4915f" stroke-width="1.0"/>
<polyline points="91,537 86.2,537 86.2,559.3" fill="none" stroke="#c4915f" stroke-width="1.3"/>
<line x1="86.2" y1="546.6" x2="90.8" y2="546.6" stroke="#c4915f" stroke-width="1.2"/>
<line x1="79.9" y1="559.3" x2="92.5" y2="559.3" stroke="#c4915f" stroke-width="1.5"/>
<line x1="82.2" y1="561.3" x2="90.2" y2="561.3" stroke="#c4915f" stroke-width="1.5"/>
<line x1="84.4" y1="563.3" x2="88.0" y2="563.3" stroke="#c4915f" stroke-width="1.5"/>
<line x1="132" y1="477.7" x2="132" y2="633.4" stroke="#c4915f" stroke-width="1.25"/>
<polyline points="127.7,488.4 132,485.2 136.3,488.4" fill="none" stroke="#c4915f" stroke-width="1.3"/>
<polyline points="127.7,491.4 132,488.2 136.3,491.4" fill="none" stroke="#c4915f" stroke-width="1.3"/>
<rect x="126.7" y="498.5" width="10.6" height="11" fill="#15a04b" stroke="#c4915f" stroke-width="1.1"/>
<line x1="132" y1="500" x2="132" y2="508" stroke="#9fcf8a" stroke-width="0.8"/>
<polyline points="127.7,515.4 132,518.6 136.3,515.4" fill="none" stroke="#c4915f" stroke-width="1.3"/>
<polyline points="127.7,518.4 132,521.6 136.3,518.4" fill="none" stroke="#c4915f" stroke-width="1.3"/>
<circle cx="16" cy="462.5" r="2.05" fill="#000"/>
<circle cx="66.4" cy="462.5" r="2.05" fill="#000"/>
<circle cx="80.4" cy="462.5" r="2.05" fill="#000"/>
<circle cx="97.6" cy="462.5" r="2.05" fill="#000"/>
<circle cx="80.4" cy="477.7" r="2.05" fill="#000"/>
<circle cx="97.5" cy="477.7" r="2.05" fill="#000"/>
<circle cx="132" cy="477.7" r="2.05" fill="#000"/>
</g>
<g transform="translate(0,0.75)">
<line x1="1050.9" y1="462.5" x2="1082.5" y2="462.5" stroke="#cf9a66" stroke-width="4.2"/>
<line x1="1101.9" y1="462.5" x2="1200.2" y2="462.5" stroke="#cf9a66" stroke-width="4.2"/>
<line x1="1050.9" y1="477.7" x2="1200.2" y2="477.7" stroke="#cf9a66" stroke-width="4.2"/>
<line x1="1131.2" y1="462.5" x2="1131.2" y2="477.7" stroke="#cf9a66" stroke-width="4.2"/>
<line x1="1066.9" y1="410.4" x2="1066.9" y2="462.5" stroke="#c4915f" stroke-width="1.25"/>
<line x1="1066.9" y1="410.4" x2="1117.3000000000002" y2="410.4" stroke="#c4915f" stroke-width="1.25"/>
<line x1="1117.3000000000002" y1="410.4" x2="1117.3000000000002" y2="462.5" stroke="#c4915f" stroke-width="1.25"/>
<line x1="1066.9" y1="439.2" x2="1078.4" y2="439.2" stroke="#c4915f" stroke-width="1.3"/>
<line x1="1078.4" y1="435.9" x2="1078.4" y2="442.5" stroke="#c4915f" stroke-width="1.4"/>
<line x1="1083.4" y1="435.2" x2="1083.4" y2="443.2" stroke="#c4915f" stroke-width="1.4"/>
<line x1="1088.4" y1="435.9" x2="1088.4" y2="442.5" stroke="#c4915f" stroke-width="1.4"/>
<line x1="1088.4" y1="439.2" x2="1094.8000000000002" y2="439.2" stroke="#c4915f" stroke-width="1.3"/>
<line x1="1094.8000000000002" y1="432.8" x2="1094.8000000000002" y2="445.59999999999997" stroke="#c4915f" stroke-width="1.4"/>
<line x1="1096.9" y1="435.2" x2="1096.9" y2="443.2" stroke="#c4915f" stroke-width="1.4"/>
<line x1="1099.0000000000002" y1="437.2" x2="1099.0000000000002" y2="441.2" stroke="#c4915f" stroke-width="1.4"/>
<polyline points="1113.0000000000002,420.2 1117.3000000000002,417 1121.6000000000001,420.2" fill="none" stroke="#c4915f" stroke-width="1.3"/>
<polyline points="1113.0000000000002,423.2 1117.3000000000002,420 1121.6000000000001,423.2" fill="none" stroke="#c4915f" stroke-width="1.3"/>
<rect x="1112.0000000000002" y="429.3" width="10.6" height="11" fill="#15a04b" stroke="#c4915f" stroke-width="1.1"/>
<line x1="1117.3000000000002" y1="430.8" x2="1117.3000000000002" y2="438.8" stroke="#9fcf8a" stroke-width="0.8"/>
<polyline points="1113.0000000000002,446.8 1117.3000000000002,450 1121.6000000000001,446.8" fill="none" stroke="#c4915f" stroke-width="1.3"/>
<polyline points="1113.0000000000002,449.8 1117.3000000000002,453 1121.6000000000001,449.8" fill="none" stroke="#c4915f" stroke-width="1.3"/>
<line x1="1148.5" y1="410.5" x2="1148.5" y2="462.5" stroke="#c4915f" stroke-width="1.25"/>
<polyline points="1144.2,420.2 1148.5,417 1152.8,420.2" fill="none" stroke="#c4915f" stroke-width="1.3"/>
<polyline points="1144.2,423.2 1148.5,420 1152.8,423.2" fill="none" stroke="#c4915f" stroke-width="1.3"/>
<rect x="1143.2" y="429.3" width="10.6" height="11" fill="#15a04b" stroke="#c4915f" stroke-width="1.1"/>
<line x1="1148.5" y1="430.8" x2="1148.5" y2="438.8" stroke="#9fcf8a" stroke-width="0.8"/>
<polyline points="1144.2,446.8 1148.5,450 1152.8,446.8" fill="none" stroke="#c4915f" stroke-width="1.3"/>
<polyline points="1144.2,449.8 1148.5,453 1152.8,449.8" fill="none" stroke="#c4915f" stroke-width="1.3"/>
<circle cx="1148.5" cy="393.4" r="6.8" fill="none" stroke="#c4915f" stroke-width="1.3"/>
<path d="M1148.5,392.02 L1150.57,395.62 L1146.43,395.62 Z" fill="none" stroke="#c4915f" stroke-width="0.9"/>
<circle cx="1148.5" cy="403.6" r="6.8" fill="none" stroke="#c4915f" stroke-width="1.3"/>
<polyline points="1146.97,401.623 1148.5,403 1150.03,401.623" fill="none" stroke="#c4915f" stroke-width="1.0"/>
<line x1="1148.5" y1="403" x2="1148.5" y2="404.683" stroke="#c4915f" stroke-width="1.0"/>
<line x1="1148.4" y1="477.7" x2="1148.4" y2="529.5" stroke="#c4915f" stroke-width="1.25"/>
<polyline points="1144.1000000000001,488.4 1148.4,485.2 1152.7,488.4" fill="none" stroke="#c4915f" stroke-width="1.3"/>
<polyline points="1144.1000000000001,491.4 1148.4,488.2 1152.7,491.4" fill="none" stroke="#c4915f" stroke-width="1.3"/>
<rect x="1143.1000000000001" y="498.5" width="10.6" height="11" fill="#15a04b" stroke="#c4915f" stroke-width="1.1"/>
<line x1="1148.4" y1="500" x2="1148.4" y2="508" stroke="#9fcf8a" stroke-width="0.8"/>
<polyline points="1144.1000000000001,515.4 1148.4,518.6 1152.7,515.4" fill="none" stroke="#c4915f" stroke-width="1.3"/>
<polyline points="1144.1000000000001,518.4 1148.4,521.6 1152.7,518.4" fill="none" stroke="#c4915f" stroke-width="1.3"/>
<circle cx="1148.2" cy="536" r="6.5" fill="none" stroke="#c4915f" stroke-width="1.3"/>
<polyline points="1146.67,534.123 1148.2,535.5 1149.73,534.123" fill="none" stroke="#c4915f" stroke-width="1.0"/>
<line x1="1148.2" y1="535.5" x2="1148.2" y2="537.183" stroke="#c4915f" stroke-width="1.0"/>
<circle cx="1157.2" cy="541.4" r="6.4" fill="none" stroke="#c4915f" stroke-width="1.3"/>
<path d="M1157.2,540.02 L1159.27,543.62 L1155.13,543.62 Z" fill="none" stroke="#c4915f" stroke-width="0.9"/>
<circle cx="1148.2" cy="546.7" r="6.5" fill="none" stroke="#c4915f" stroke-width="1.3"/>
<polyline points="1146.67,545.123 1148.2,546.5 1149.73,545.123" fill="none" stroke="#c4915f" stroke-width="1.0"/>
<line x1="1148.2" y1="546.5" x2="1148.2" y2="548.183" stroke="#c4915f" stroke-width="1.0"/>
<polyline points="1141.9,537 1137.1000000000001,537 1137.1000000000001,559.3" fill="none" stroke="#c4915f" stroke-width="1.3"/>
<line x1="1137.1000000000001" y1="546.6" x2="1141.7" y2="546.6" stroke="#c4915f" stroke-width="1.2"/>
<line x1="1130.8000000000002" y1="559.3" x2="1143.4" y2="559.3" stroke="#c4915f" stroke-width="1.5"/>
<line x1="1133.1000000000001" y1="561.3" x2="1141.1000000000001" y2="561.3" stroke="#c4915f" stroke-width="1.5"/>
<line x1="1135.3000000000002" y1="563.3" x2="1138.9" y2="563.3" stroke="#c4915f" stroke-width="1.5"/>
<line x1="1182.9" y1="477.7" x2="1182.9" y2="632.65" stroke="#c4915f" stroke-width="1.25"/>
<polyline points="1178.6000000000001,488.4 1182.9,485.2 1187.2,488.4" fill="none" stroke="#c4915f" stroke-width="1.3"/>
<polyline points="1178.6000000000001,491.4 1182.9,488.2 1187.2,491.4" fill="none" stroke="#c4915f" stroke-width="1.3"/>
<rect x="1177.6000000000001" y="498.5" width="10.6" height="11" fill="#15a04b" stroke="#c4915f" stroke-width="1.1"/>
<line x1="1182.9" y1="500" x2="1182.9" y2="508" stroke="#9fcf8a" stroke-width="0.8"/>
<polyline points="1178.6000000000001,515.4 1182.9,518.6 1187.2,515.4" fill="none" stroke="#c4915f" stroke-width="1.3"/>
<polyline points="1178.6000000000001,518.4 1182.9,521.6 1187.2,518.4" fill="none" stroke="#c4915f" stroke-width="1.3"/>
<circle cx="1066.9" cy="462.5" r="2.05" fill="#000"/>
<circle cx="1117.3000000000002" cy="462.5" r="2.05" fill="#000"/>
<circle cx="1131.3000000000002" cy="462.5" r="2.05" fill="#000"/>
<circle cx="1148.5" cy="462.5" r="2.05" fill="#000"/>
<circle cx="1131.3000000000002" cy="477.7" r="2.05" fill="#000"/>
<circle cx="1148.4" cy="477.7" r="2.05" fill="#000"/>
<circle cx="1182.9" cy="477.7" r="2.05" fill="#000"/>
</g>
<line x1="132" y1="633.4" x2="314" y2="633.4" stroke="#c4915f" stroke-width="1.25"/>
<line x1="836.8" y1="633.4" x2="1183.7" y2="633.4" stroke="#c4915f" stroke-width="1.25"/>
<circle cx="338" cy="448.2" r="2.05" fill="#000"/>
<circle cx="377.5" cy="463.3" r="2.05" fill="#000"/>
<circle cx="393" cy="448.2" r="2.05" fill="#000"/>
<circle cx="432.5" cy="463.3" r="2.05" fill="#000"/>
<circle cx="448.1" cy="448.2" r="2.05" fill="#000"/>
<circle cx="487.7" cy="463.3" r="2.05" fill="#000"/>
<circle cx="516.3" cy="448.2" r="2.05" fill="#000"/>
<circle cx="555.8" cy="463.3" r="2.05" fill="#000"/>
<circle cx="635" cy="448.2" r="2.05" fill="#000"/>
<circle cx="675" cy="463.3" r="2.05" fill="#000"/>
<circle cx="690.5" cy="448.2" r="2.05" fill="#000"/>
<circle cx="730" cy="463.3" r="2.05" fill="#000"/>
<circle cx="767.5" cy="448.2" r="2.05" fill="#000"/>
<circle cx="807" cy="463.3" r="2.05" fill="#000"/>
<circle cx="884" cy="448.2" r="2.05" fill="#000"/>
<circle cx="923.5" cy="463.3" r="2.05" fill="#000"/>
<circle cx="965" cy="448.2" r="2.05" fill="#000"/>
<circle cx="1004.6" cy="463.3" r="2.05" fill="#000"/>
<circle cx="197.5" cy="478.3" r="2.05" fill="#000"/>
<circle cx="237" cy="493.8" r="2.05" fill="#000"/>
<circle cx="273.8" cy="478.3" r="2.05" fill="#000"/>
<circle cx="313.3" cy="493.8" r="2.05" fill="#000"/>
<circle cx="363.8" cy="478.3" r="2.05" fill="#000"/>
<circle cx="403.8" cy="493.8" r="2.05" fill="#000"/>
<circle cx="427.5" cy="478.3" r="2.05" fill="#000"/>
<circle cx="467" cy="493.8" r="2.05" fill="#000"/>
<circle cx="480" cy="478.3" r="2.05" fill="#000"/>
<circle cx="519.5" cy="493.8" r="2.05" fill="#000"/>
<circle cx="531.3" cy="478.3" r="2.05" fill="#000"/>
<circle cx="571.3" cy="493.8" r="2.05" fill="#000"/>
<circle cx="653.3" cy="478.3" r="2.05" fill="#000"/>
<circle cx="693" cy="493.8" r="2.05" fill="#000"/>
<circle cx="708.3" cy="478.3" r="2.05" fill="#000"/>
<circle cx="748" cy="493.8" r="2.05" fill="#000"/>
<circle cx="763" cy="478.3" r="2.05" fill="#000"/>
<circle cx="802.5" cy="493.8" r="2.05" fill="#000"/>
<circle cx="817.5" cy="478.3" r="2.05" fill="#000"/>
<circle cx="857" cy="493.8" r="2.05" fill="#000"/>
<circle cx="873" cy="478.3" r="2.05" fill="#000"/>
<circle cx="912.5" cy="493.8" r="2.05" fill="#000"/>
<circle cx="929.3" cy="478.3" r="2.05" fill="#000"/>
<circle cx="968.8" cy="493.8" r="2.05" fill="#000"/>
<text x="543.5" y="216.6" fill="#a4a4a4" font-size="17.6" textLength="89.1" lengthAdjust="spacingAndGlyphs">ГРУ - 6.3 кВ</text>
<rect x="335.8" y="284.8" width="59.19999999999999" height="17.30000000000001" fill="#a9dc9b" stroke="#66755f" stroke-width="0.8"/>
<text x="365.4" y="295.85" fill="#1d2a18" text-anchor="middle" font-size="6.6" font-weight="bold">Т2-6 кВ</text>
<rect x="338.15" y="234.6" width="54.5" height="41.2" fill="#646464"/>
<path d="M360.4,275.8 L370.4,275.8 L365.4,281.2 Z" fill="#646464"/>
<text x="368.3975" y="245.0" fill="#f4f4f4" text-anchor="end" font-size="7.2">I<tspan font-size="4.2" dy="1.6">Σ</tspan><tspan font-size="5" dy="-1.6">, А</tspan><tspan font-size="6.2"> =</tspan></text>
<text x="380.115" y="245.3" fill="#f4f4f4" text-anchor="middle" font-size="8.3" transform="translate(380.12,0) scale(0.9,1) translate(-380.12,0)">15.25</text>
<text x="368.3975" y="257.0" fill="#f4f4f4" text-anchor="end" font-size="7.2">P<tspan font-size="4.2" dy="1.6">Σ</tspan><tspan font-size="5" dy="-1.6">, МВт</tspan><tspan font-size="6.2"> =</tspan></text>
<text x="380.115" y="257.3" fill="#f4f4f4" text-anchor="middle" font-size="8.3" transform="translate(380.12,0) scale(0.9,1) translate(-380.12,0)">0</text>
<text x="368.3975" y="269.0" fill="#f4f4f4" text-anchor="end" font-size="7.2">Q<tspan font-size="4.2" dy="1.6">Σ</tspan><tspan font-size="5" dy="-1.6">, Мвар</tspan><tspan font-size="6.2"> =</tspan></text>
<text x="380.115" y="269.3" fill="#f4f4f4" text-anchor="middle" font-size="8.3" transform="translate(380.12,0) scale(0.9,1) translate(-380.12,0)">0</text>
<rect x="395" y="284.8" width="60.60000000000002" height="17.30000000000001" fill="#a9dc9b" stroke="#66755f" stroke-width="0.8"/>
<text x="425.3" y="295.85" fill="#1d2a18" text-anchor="middle" font-size="6.6" font-weight="bold">21Ш2</text>
<rect x="398.05" y="234.6" width="54.5" height="41.2" fill="#646464"/>
<path d="M420.3,275.8 L430.3,275.8 L425.3,281.2 Z" fill="#646464"/>
<text x="428.2975" y="245.0" fill="#f4f4f4" text-anchor="end" font-size="7.2">I<tspan font-size="4.2" dy="1.6">Σ</tspan><tspan font-size="5" dy="-1.6">, А</tspan><tspan font-size="6.2"> =</tspan></text>
<text x="440.015" y="245.3" fill="#f4f4f4" text-anchor="middle" font-size="8.3" font-style="italic" transform="translate(440.01,0) scale(0.9,1) translate(-440.01,0)">0?</text>
<text x="428.2975" y="257.0" fill="#f4f4f4" text-anchor="end" font-size="7.2">P<tspan font-size="4.2" dy="1.6">Σ</tspan><tspan font-size="5" dy="-1.6">, МВт</tspan><tspan font-size="6.2"> =</tspan></text>
<text x="440.015" y="257.3" fill="#f4f4f4" text-anchor="middle" font-size="8.3" font-style="italic" transform="translate(440.01,0) scale(0.9,1) translate(-440.01,0)">0?</text>
<text x="428.2975" y="269.0" fill="#f4f4f4" text-anchor="end" font-size="7.2">Q<tspan font-size="4.2" dy="1.6">Σ</tspan><tspan font-size="5" dy="-1.6">, Мвар</tspan><tspan font-size="6.2"> =</tspan></text>
<text x="440.015" y="269.3" fill="#f4f4f4" text-anchor="middle" font-size="8.3" font-style="italic" transform="translate(440.01,0) scale(0.9,1) translate(-440.01,0)">0?</text>
<rect x="455.6" y="284.8" width="59.39999999999998" height="17.30000000000001" fill="#a9dc9b" stroke="#66755f" stroke-width="0.8"/>
<text x="485.3" y="295.85" fill="#1d2a18" text-anchor="middle" font-size="6.6" font-weight="bold">ШСВ-II</text>
<rect x="458.05" y="234.6" width="54.5" height="41.2" fill="#646464"/>
<path d="M480.3,275.8 L490.3,275.8 L485.3,281.2 Z" fill="#646464"/>
<text x="488.2975" y="245.0" fill="#f4f4f4" text-anchor="end" font-size="7.2">I<tspan font-size="4.2" dy="1.6">Σ</tspan><tspan font-size="5" dy="-1.6">, А</tspan><tspan font-size="6.2"> =</tspan></text>
<text x="500.015" y="245.3" fill="#f4f4f4" text-anchor="middle" font-size="8.3" transform="translate(500.01,0) scale(0.9,1) translate(-500.01,0)">0</text>
<text x="488.2975" y="257.0" fill="#f4f4f4" text-anchor="end" font-size="7.2">P<tspan font-size="4.2" dy="1.6">Σ</tspan><tspan font-size="5" dy="-1.6">, МВт</tspan><tspan font-size="6.2"> =</tspan></text>
<text x="500.015" y="257.3" fill="#f4f4f4" text-anchor="middle" font-size="8.3" transform="translate(500.01,0) scale(0.9,1) translate(-500.01,0)">0</text>
<text x="488.2975" y="269.0" fill="#f4f4f4" text-anchor="end" font-size="7.2">Q<tspan font-size="4.2" dy="1.6">Σ</tspan><tspan font-size="5" dy="-1.6">, Мвар</tspan><tspan font-size="6.2"> =</tspan></text>
<text x="500.015" y="269.3" fill="#f4f4f4" text-anchor="middle" font-size="8.3" transform="translate(500.01,0) scale(0.9,1) translate(-500.01,0)">0</text>
<rect x="515" y="284.8" width="151.39999999999998" height="17.30000000000001" fill="#a9dc9b" stroke="#66755f" stroke-width="0.8"/>
<text x="590.7" y="295.85" fill="#1d2a18" text-anchor="middle" font-size="6.6" font-weight="bold">СВ-6</text>
<rect x="561.45" y="234.6" width="58.5" height="41.2" fill="#646464"/>
<path d="M585.7,275.8 L595.7,275.8 L590.7,281.2 Z" fill="#646464"/>
<text x="593.9175" y="245.0" fill="#f4f4f4" text-anchor="end" font-size="7.2">I<tspan font-size="4.2" dy="1.6">Σ</tspan><tspan font-size="5" dy="-1.6">, А</tspan><tspan font-size="6.2"> =</tspan></text>
<text x="606.495" y="245.3" fill="#f4f4f4" text-anchor="middle" font-size="8.3" transform="translate(606.50,0) scale(0.9,1) translate(-606.50,0)">428.98</text>
<text x="593.9175" y="257.0" fill="#f4f4f4" text-anchor="end" font-size="7.2">P<tspan font-size="4.2" dy="1.6">Σ</tspan><tspan font-size="5" dy="-1.6">, МВт</tspan><tspan font-size="6.2"> =</tspan></text>
<text x="606.495" y="257.3" fill="#f4f4f4" text-anchor="middle" font-size="8.3" transform="translate(606.50,0) scale(0.9,1) translate(-606.50,0)">-4.475</text>
<text x="593.9175" y="269.0" fill="#f4f4f4" text-anchor="end" font-size="7.2">Q<tspan font-size="4.2" dy="1.6">Σ</tspan><tspan font-size="5" dy="-1.6">, Мвар</tspan><tspan font-size="6.2"> =</tspan></text>
<text x="606.495" y="269.3" fill="#f4f4f4" text-anchor="middle" font-size="8.3" transform="translate(606.50,0) scale(0.9,1) translate(-606.50,0)">-1.125</text>
<rect x="666.4" y="284.8" width="59.89999999999998" height="17.30000000000001" fill="#a9dc9b" stroke="#66755f" stroke-width="0.8"/>
<text x="696.3499999999999" y="295.85" fill="#1d2a18" text-anchor="middle" font-size="6.6" font-weight="bold">ШСВ-I</text>
<rect x="669.0999999999999" y="234.6" width="54.5" height="41.2" fill="#646464"/>
<path d="M691.3499999999999,275.8 L701.3499999999999,275.8 L696.3499999999999,281.2 Z" fill="#646464"/>
<text x="699.3474999999999" y="245.0" fill="#f4f4f4" text-anchor="end" font-size="7.2">I<tspan font-size="4.2" dy="1.6">Σ</tspan><tspan font-size="5" dy="-1.6">, А</tspan><tspan font-size="6.2"> =</tspan></text>
<text x="711.0649999999999" y="245.3" fill="#f4f4f4" text-anchor="middle" font-size="8.3" transform="translate(711.06,0) scale(0.9,1) translate(-711.06,0)">920.82</text>
<text x="699.3474999999999" y="257.0" fill="#f4f4f4" text-anchor="end" font-size="7.2">P<tspan font-size="4.2" dy="1.6">Σ</tspan><tspan font-size="5" dy="-1.6">, МВт</tspan><tspan font-size="6.2"> =</tspan></text>
<text x="711.0649999999999" y="257.3" fill="#f4f4f4" text-anchor="middle" font-size="8.3" transform="translate(711.06,0) scale(0.9,1) translate(-711.06,0)">-9.98</text>
<text x="699.3474999999999" y="269.0" fill="#f4f4f4" text-anchor="end" font-size="7.2">Q<tspan font-size="4.2" dy="1.6">Σ</tspan><tspan font-size="5" dy="-1.6">, Мвар</tspan><tspan font-size="6.2"> =</tspan></text>
<text x="711.0649999999999" y="269.3" fill="#f4f4f4" text-anchor="middle" font-size="8.3" transform="translate(711.06,0) scale(0.9,1) translate(-711.06,0)">-0.455</text>
<rect x="726.3" y="284.8" width="59.5" height="17.30000000000001" fill="#a9dc9b" stroke="#66755f" stroke-width="0.8"/>
<text x="756.05" y="295.85" fill="#1d2a18" text-anchor="middle" font-size="6.6" font-weight="bold">Р1Ф</text>
<rect x="728.8" y="234.6" width="54.5" height="41.2" fill="#646464"/>
<path d="M751.05,275.8 L761.05,275.8 L756.05,281.2 Z" fill="#646464"/>
<text x="759.0474999999999" y="245.0" fill="#f4f4f4" text-anchor="end" font-size="7.2">I<tspan font-size="4.2" dy="1.6">Σ</tspan><tspan font-size="5" dy="-1.6">, А</tspan><tspan font-size="6.2"> =</tspan></text>
<text x="770.765" y="245.3" fill="#f4f4f4" text-anchor="middle" font-size="8.3" transform="translate(770.76,0) scale(0.9,1) translate(-770.76,0)">111.03</text>
<text x="759.0474999999999" y="257.0" fill="#f4f4f4" text-anchor="end" font-size="7.2">P<tspan font-size="4.2" dy="1.6">Σ</tspan><tspan font-size="5" dy="-1.6">, МВт</tspan><tspan font-size="6.2"> =</tspan></text>
<text x="770.765" y="257.3" fill="#f4f4f4" text-anchor="middle" font-size="8.3" transform="translate(770.76,0) scale(0.9,1) translate(-770.76,0)">-0.954</text>
<text x="759.0474999999999" y="269.0" fill="#f4f4f4" text-anchor="end" font-size="7.2">Q<tspan font-size="4.2" dy="1.6">Σ</tspan><tspan font-size="5" dy="-1.6">, Мвар</tspan><tspan font-size="6.2"> =</tspan></text>
<text x="770.765" y="269.3" fill="#f4f4f4" text-anchor="middle" font-size="8.3" transform="translate(770.76,0) scale(0.9,1) translate(-770.76,0)">-0.743</text>
<rect x="785.8" y="284.8" width="59.80000000000007" height="17.30000000000001" fill="#a9dc9b" stroke="#66755f" stroke-width="0.8"/>
<text x="815.7" y="295.85" fill="#1d2a18" text-anchor="middle" font-size="6.6" font-weight="bold">7Ш1</text>
<rect x="788.45" y="234.6" width="54.5" height="41.2" fill="#646464"/>
<path d="M810.7,275.8 L820.7,275.8 L815.7,281.2 Z" fill="#646464"/>
<text x="818.6975" y="245.0" fill="#f4f4f4" text-anchor="end" font-size="7.2">I<tspan font-size="4.2" dy="1.6">Σ</tspan><tspan font-size="5" dy="-1.6">, А</tspan><tspan font-size="6.2"> =</tspan></text>
<text x="830.4150000000001" y="245.3" fill="#f4f4f4" text-anchor="middle" font-size="8.3" transform="translate(830.42,0) scale(0.9,1) translate(-830.42,0)">2.7</text>
<text x="818.6975" y="257.0" fill="#f4f4f4" text-anchor="end" font-size="7.2">P<tspan font-size="4.2" dy="1.6">Σ</tspan><tspan font-size="5" dy="-1.6">, МВт</tspan><tspan font-size="6.2"> =</tspan></text>
<text x="830.4150000000001" y="257.3" fill="#f4f4f4" text-anchor="middle" font-size="8.3" transform="translate(830.42,0) scale(0.9,1) translate(-830.42,0)">0</text>
<text x="818.6975" y="269.0" fill="#f4f4f4" text-anchor="end" font-size="7.2">Q<tspan font-size="4.2" dy="1.6">Σ</tspan><tspan font-size="5" dy="-1.6">, Мвар</tspan><tspan font-size="6.2"> =</tspan></text>
<text x="830.4150000000001" y="269.3" fill="#f4f4f4" text-anchor="middle" font-size="8.3" transform="translate(830.42,0) scale(0.9,1) translate(-830.42,0)">0</text>
<rect x="845.6" y="284.8" width="59.5" height="17.30000000000001" fill="#a9dc9b" stroke="#66755f" stroke-width="0.8"/>
<text x="875.35" y="295.85" fill="#1d2a18" text-anchor="middle" font-size="6.6" font-weight="bold">5Ш2</text>
<rect x="848.1" y="234.6" width="54.5" height="41.2" fill="#646464"/>
<path d="M870.35,275.8 L880.35,275.8 L875.35,281.2 Z" fill="#646464"/>
<text x="878.3475000000001" y="245.0" fill="#f4f4f4" text-anchor="end" font-size="7.2">I<tspan font-size="4.2" dy="1.6">Σ</tspan><tspan font-size="5" dy="-1.6">, А</tspan><tspan font-size="6.2"> =</tspan></text>
<text x="890.065" y="245.3" fill="#f4f4f4" text-anchor="middle" font-size="8.3" transform="translate(890.07,0) scale(0.9,1) translate(-890.07,0)">0.1</text>
<text x="878.3475000000001" y="257.0" fill="#f4f4f4" text-anchor="end" font-size="7.2">P<tspan font-size="4.2" dy="1.6">Σ</tspan><tspan font-size="5" dy="-1.6">, МВт</tspan><tspan font-size="6.2"> =</tspan></text>
<text x="890.065" y="257.3" fill="#f4f4f4" text-anchor="middle" font-size="8.3" transform="translate(890.07,0) scale(0.9,1) translate(-890.07,0)">0</text>
<text x="878.3475000000001" y="269.0" fill="#f4f4f4" text-anchor="end" font-size="7.2">Q<tspan font-size="4.2" dy="1.6">Σ</tspan><tspan font-size="5" dy="-1.6">, Мвар</tspan><tspan font-size="6.2"> =</tspan></text>
<text x="890.065" y="269.3" fill="#f4f4f4" text-anchor="middle" font-size="8.3" transform="translate(890.07,0) scale(0.9,1) translate(-890.07,0)">-0.001</text>
<rect x="905.1" y="284.8" width="60.19999999999993" height="17.30000000000001" fill="#a9dc9b" stroke="#66755f" stroke-width="0.8"/>
<text x="935.2" y="295.85" fill="#1d2a18" text-anchor="middle" font-size="6.6" font-weight="bold">5Ш1</text>
<rect x="907.95" y="234.6" width="54.5" height="41.2" fill="#646464"/>
<path d="M930.2,275.8 L940.2,275.8 L935.2,281.2 Z" fill="#646464"/>
<text x="938.1975" y="245.0" fill="#f4f4f4" text-anchor="end" font-size="7.2">I<tspan font-size="4.2" dy="1.6">Σ</tspan><tspan font-size="5" dy="-1.6">, А</tspan><tspan font-size="6.2"> =</tspan></text>
<text x="949.9150000000001" y="245.3" fill="#f4f4f4" text-anchor="middle" font-size="8.3" transform="translate(949.92,0) scale(0.9,1) translate(-949.92,0)">44.09</text>
<text x="938.1975" y="257.0" fill="#f4f4f4" text-anchor="end" font-size="7.2">P<tspan font-size="4.2" dy="1.6">Σ</tspan><tspan font-size="5" dy="-1.6">, МВт</tspan><tspan font-size="6.2"> =</tspan></text>
<text x="949.9150000000001" y="257.3" fill="#f4f4f4" text-anchor="middle" font-size="8.3" transform="translate(949.92,0) scale(0.9,1) translate(-949.92,0)">0.36</text>
<text x="938.1975" y="269.0" fill="#f4f4f4" text-anchor="end" font-size="7.2">Q<tspan font-size="4.2" dy="1.6">Σ</tspan><tspan font-size="5" dy="-1.6">, Мвар</tspan><tspan font-size="6.2"> =</tspan></text>
<text x="949.9150000000001" y="269.3" fill="#f4f4f4" text-anchor="middle" font-size="8.3" transform="translate(949.92,0) scale(0.9,1) translate(-949.92,0)">0.252</text>
<rect x="965.3" y="284.8" width="59.5" height="17.30000000000001" fill="#a9dc9b" stroke="#66755f" stroke-width="0.8"/>
<text x="995.05" y="295.85" fill="#1d2a18" text-anchor="middle" font-size="6.6" font-weight="bold">Т1-6 кВ</text>
<rect x="967.8" y="234.6" width="54.5" height="41.2" fill="#646464"/>
<path d="M990.05,275.8 L1000.05,275.8 L995.05,281.2 Z" fill="#646464"/>
<text x="998.0474999999999" y="245.0" fill="#f4f4f4" text-anchor="end" font-size="7.2">I<tspan font-size="4.2" dy="1.6">Σ</tspan><tspan font-size="5" dy="-1.6">, А</tspan><tspan font-size="6.2"> =</tspan></text>
<text x="1009.765" y="245.3" fill="#f4f4f4" text-anchor="middle" font-size="8.3" transform="translate(1009.76,0) scale(0.9,1) translate(-1009.76,0)">0</text>
<text x="998.0474999999999" y="257.0" fill="#f4f4f4" text-anchor="end" font-size="7.2">P<tspan font-size="4.2" dy="1.6">Σ</tspan><tspan font-size="5" dy="-1.6">, МВт</tspan><tspan font-size="6.2"> =</tspan></text>
<text x="1009.765" y="257.3" fill="#f4f4f4" text-anchor="middle" font-size="8.3" transform="translate(1009.76,0) scale(0.9,1) translate(-1009.76,0)">0</text>
<text x="998.0474999999999" y="269.0" fill="#f4f4f4" text-anchor="end" font-size="7.2">Q<tspan font-size="4.2" dy="1.6">Σ</tspan><tspan font-size="5" dy="-1.6">, Мвар</tspan><tspan font-size="6.2"> =</tspan></text>
<text x="1009.765" y="269.3" fill="#f4f4f4" text-anchor="middle" font-size="8.3" transform="translate(1009.76,0) scale(0.9,1) translate(-1009.76,0)">0</text>
<rect x="175" y="642.4" width="60" height="16.899999999999977" fill="#a9dc9b" stroke="#66755f" stroke-width="0.8"/>
<text x="205.0" y="653.2499999999999" fill="#1d2a18" text-anchor="middle" font-size="6.6" font-weight="bold">ТГ4</text>
<rect x="177.6" y="668.5" width="54.8" height="41" fill="#646464"/>
<path d="M200.0,668.5 L210.0,668.5 L205.0,663.1 Z" fill="#646464"/>
<text x="208.014" y="678.9" fill="#f4f4f4" text-anchor="end" font-size="7.2">I<tspan font-size="4.2" dy="1.6">Σ</tspan><tspan font-size="5" dy="-1.6">, А</tspan><tspan font-size="6.2"> =</tspan></text>
<text x="219.796" y="679.1999999999999" fill="#f4f4f4" text-anchor="middle" font-size="8.3" transform="translate(219.80,0) scale(0.9,1) translate(-219.80,0)">1134.04</text>
<text x="208.014" y="690.9" fill="#f4f4f4" text-anchor="end" font-size="7.2">P<tspan font-size="4.2" dy="1.6">Σ</tspan><tspan font-size="5" dy="-1.6">, МВт</tspan><tspan font-size="6.2"> =</tspan></text>
<text x="219.796" y="691.1999999999999" fill="#f4f4f4" text-anchor="middle" font-size="8.3" transform="translate(219.80,0) scale(0.9,1) translate(-219.80,0)">12.123</text>
<text x="208.014" y="702.9" fill="#f4f4f4" text-anchor="end" font-size="7.2">Q<tspan font-size="4.2" dy="1.6">Σ</tspan><tspan font-size="5" dy="-1.6">, Мвар</tspan><tspan font-size="6.2"> =</tspan></text>
<text x="219.796" y="703.1999999999999" fill="#f4f4f4" text-anchor="middle" font-size="8.3" transform="translate(219.80,0) scale(0.9,1) translate(-219.80,0)">2.8</text>
<rect x="235" y="642.4" width="60" height="16.899999999999977" fill="#a9dc9b" stroke="#66755f" stroke-width="0.8"/>
<text x="265.0" y="653.2499999999999" fill="#1d2a18" text-anchor="middle" font-size="6.6" font-weight="bold">9ВА</text>
<rect x="237.6" y="668.5" width="54.8" height="41" fill="#646464"/>
<path d="M260.0,668.5 L270.0,668.5 L265.0,663.1 Z" fill="#646464"/>
<text x="268.014" y="678.9" fill="#f4f4f4" text-anchor="end" font-size="7.2">I<tspan font-size="4.2" dy="1.6">Σ</tspan><tspan font-size="5" dy="-1.6">, А</tspan><tspan font-size="6.2"> =</tspan></text>
<text x="279.796" y="679.1999999999999" fill="#f4f4f4" text-anchor="middle" font-size="8.3" transform="translate(279.80,0) scale(0.9,1) translate(-279.80,0)">0</text>
<text x="268.014" y="690.9" fill="#f4f4f4" text-anchor="end" font-size="7.2">P<tspan font-size="4.2" dy="1.6">Σ</tspan><tspan font-size="5" dy="-1.6">, МВт</tspan><tspan font-size="6.2"> =</tspan></text>
<text x="279.796" y="691.1999999999999" fill="#f4f4f4" text-anchor="middle" font-size="8.3" transform="translate(279.80,0) scale(0.9,1) translate(-279.80,0)">0</text>
<text x="268.014" y="702.9" fill="#f4f4f4" text-anchor="end" font-size="7.2">Q<tspan font-size="4.2" dy="1.6">Σ</tspan><tspan font-size="5" dy="-1.6">, Мвар</tspan><tspan font-size="6.2"> =</tspan></text>
<text x="279.796" y="703.1999999999999" fill="#f4f4f4" text-anchor="middle" font-size="8.3" transform="translate(279.80,0) scale(0.9,1) translate(-279.80,0)">0</text>
<rect x="295" y="642.4" width="59.30000000000001" height="16.899999999999977" fill="#a9dc9b" stroke="#66755f" stroke-width="0.8"/>
<text x="324.65" y="653.2499999999999" fill="#1d2a18" text-anchor="middle" font-size="6.6" font-weight="bold">8ВА</text>
<rect x="297.25" y="668.5" width="54.8" height="41" fill="#646464"/>
<path d="M319.65,668.5 L329.65,668.5 L324.65,663.1 Z" fill="#646464"/>
<text x="327.664" y="678.9" fill="#f4f4f4" text-anchor="end" font-size="7.2">I<tspan font-size="4.2" dy="1.6">Σ</tspan><tspan font-size="5" dy="-1.6">, А</tspan><tspan font-size="6.2"> =</tspan></text>
<text x="339.446" y="679.1999999999999" fill="#f4f4f4" text-anchor="middle" font-size="8.3" transform="translate(339.45,0) scale(0.9,1) translate(-339.45,0)">113.35</text>
<text x="327.664" y="690.9" fill="#f4f4f4" text-anchor="end" font-size="7.2">P<tspan font-size="4.2" dy="1.6">Σ</tspan><tspan font-size="5" dy="-1.6">, МВт</tspan><tspan font-size="6.2"> =</tspan></text>
<text x="339.446" y="691.1999999999999" fill="#f4f4f4" text-anchor="middle" font-size="8.3" transform="translate(339.45,0) scale(0.9,1) translate(-339.45,0)">0.482</text>
<text x="327.664" y="702.9" fill="#f4f4f4" text-anchor="end" font-size="7.2">Q<tspan font-size="4.2" dy="1.6">Σ</tspan><tspan font-size="5" dy="-1.6">, Мвар</tspan><tspan font-size="6.2"> =</tspan></text>
<text x="339.446" y="703.1999999999999" fill="#f4f4f4" text-anchor="middle" font-size="8.3" transform="translate(339.45,0) scale(0.9,1) translate(-339.45,0)">-0.521</text>
<rect x="354.3" y="642.4" width="60.0" height="16.899999999999977" fill="#a9dc9b" stroke="#66755f" stroke-width="0.8"/>
<text x="384.3" y="653.2499999999999" fill="#1d2a18" text-anchor="middle" font-size="6.6" font-weight="bold">Р45Ф</text>
<rect x="356.90000000000003" y="668.5" width="54.8" height="41" fill="#646464"/>
<path d="M379.3,668.5 L389.3,668.5 L384.3,663.1 Z" fill="#646464"/>
<text x="387.314" y="678.9" fill="#f4f4f4" text-anchor="end" font-size="7.2">I<tspan font-size="4.2" dy="1.6">Σ</tspan><tspan font-size="5" dy="-1.6">, А</tspan><tspan font-size="6.2"> =</tspan></text>
<text x="399.096" y="679.1999999999999" fill="#f4f4f4" text-anchor="middle" font-size="8.3" transform="translate(399.10,0) scale(0.9,1) translate(-399.10,0)">195.65</text>
<text x="387.314" y="690.9" fill="#f4f4f4" text-anchor="end" font-size="7.2">P<tspan font-size="4.2" dy="1.6">Σ</tspan><tspan font-size="5" dy="-1.6">, МВт</tspan><tspan font-size="6.2"> =</tspan></text>
<text x="399.096" y="691.1999999999999" fill="#f4f4f4" text-anchor="middle" font-size="8.3" transform="translate(399.10,0) scale(0.9,1) translate(-399.10,0)">1.694</text>
<text x="387.314" y="702.9" fill="#f4f4f4" text-anchor="end" font-size="7.2">Q<tspan font-size="4.2" dy="1.6">Σ</tspan><tspan font-size="5" dy="-1.6">, Мвар</tspan><tspan font-size="6.2"> =</tspan></text>
<text x="399.096" y="703.1999999999999" fill="#f4f4f4" text-anchor="middle" font-size="8.3" transform="translate(399.10,0) scale(0.9,1) translate(-399.10,0)">1.299</text>
<rect x="414.3" y="642.4" width="60.0" height="16.899999999999977" fill="#a9dc9b" stroke="#66755f" stroke-width="0.8"/>
<text x="444.3" y="653.2499999999999" fill="#1d2a18" text-anchor="middle" font-size="6.6" font-weight="bold">Р6Ф</text>
<rect x="416.90000000000003" y="668.5" width="54.8" height="41" fill="#646464"/>
<path d="M439.3,668.5 L449.3,668.5 L444.3,663.1 Z" fill="#646464"/>
<text x="447.314" y="678.9" fill="#f4f4f4" text-anchor="end" font-size="7.2">I<tspan font-size="4.2" dy="1.6">Σ</tspan><tspan font-size="5" dy="-1.6">, А</tspan><tspan font-size="6.2"> =</tspan></text>
<text x="459.096" y="679.1999999999999" fill="#f4f4f4" text-anchor="middle" font-size="8.3" transform="translate(459.10,0) scale(0.9,1) translate(-459.10,0)">1.84</text>
<text x="447.314" y="690.9" fill="#f4f4f4" text-anchor="end" font-size="7.2">P<tspan font-size="4.2" dy="1.6">Σ</tspan><tspan font-size="5" dy="-1.6">, МВт</tspan><tspan font-size="6.2"> =</tspan></text>
<text x="459.096" y="691.1999999999999" fill="#f4f4f4" text-anchor="middle" font-size="8.3" transform="translate(459.10,0) scale(0.9,1) translate(-459.10,0)">0.012</text>
<text x="447.314" y="702.9" fill="#f4f4f4" text-anchor="end" font-size="7.2">Q<tspan font-size="4.2" dy="1.6">Σ</tspan><tspan font-size="5" dy="-1.6">, Мвар</tspan><tspan font-size="6.2"> =</tspan></text>
<text x="459.096" y="703.1999999999999" fill="#f4f4f4" text-anchor="middle" font-size="8.3" transform="translate(459.10,0) scale(0.9,1) translate(-459.10,0)">0.02</text>
<rect x="474.3" y="642.4" width="59.49999999999994" height="16.899999999999977" fill="#a9dc9b" stroke="#66755f" stroke-width="0.8"/>
<text x="504.04999999999995" y="653.2499999999999" fill="#1d2a18" text-anchor="middle" font-size="6.6" font-weight="bold">ТГ3</text>
<rect x="476.65" y="668.5" width="54.8" height="41" fill="#646464"/>
<path d="M499.04999999999995,668.5 L509.04999999999995,668.5 L504.04999999999995,663.1 Z" fill="#646464"/>
<text x="507.06399999999996" y="678.9" fill="#f4f4f4" text-anchor="end" font-size="7.2">I<tspan font-size="4.2" dy="1.6">Σ</tspan><tspan font-size="5" dy="-1.6">, А</tspan><tspan font-size="6.2"> =</tspan></text>
<text x="518.846" y="679.1999999999999" fill="#f4f4f4" text-anchor="middle" font-size="8.3" transform="translate(518.85,0) scale(0.9,1) translate(-518.85,0)">1009.78</text>
<text x="507.06399999999996" y="690.9" fill="#f4f4f4" text-anchor="end" font-size="7.2">P<tspan font-size="4.2" dy="1.6">Σ</tspan><tspan font-size="5" dy="-1.6">, МВт</tspan><tspan font-size="6.2"> =</tspan></text>
<text x="518.846" y="691.1999999999999" fill="#f4f4f4" text-anchor="middle" font-size="8.3" transform="translate(518.85,0) scale(0.9,1) translate(-518.85,0)">10.088</text>
<text x="507.06399999999996" y="702.9" fill="#f4f4f4" text-anchor="end" font-size="7.2">Q<tspan font-size="4.2" dy="1.6">Σ</tspan><tspan font-size="5" dy="-1.6">, Мвар</tspan><tspan font-size="6.2"> =</tspan></text>
<text x="518.846" y="703.1999999999999" fill="#f4f4f4" text-anchor="middle" font-size="8.3" transform="translate(518.85,0) scale(0.9,1) translate(-518.85,0)">4.557</text>
<rect x="533.8" y="642.4" width="59.200000000000045" height="16.899999999999977" fill="#a9dc9b" stroke="#66755f" stroke-width="0.8"/>
<text x="563.4" y="653.2499999999999" fill="#1d2a18" text-anchor="middle" font-size="6.6" font-weight="bold">16Ш1</text>
<rect x="536.0" y="668.5" width="54.8" height="41" fill="#646464"/>
<path d="M558.4,668.5 L568.4,668.5 L563.4,663.1 Z" fill="#646464"/>
<text x="566.414" y="678.9" fill="#f4f4f4" text-anchor="end" font-size="7.2">I<tspan font-size="4.2" dy="1.6">Σ</tspan><tspan font-size="5" dy="-1.6">, А</tspan><tspan font-size="6.2"> =</tspan></text>
<text x="578.196" y="679.1999999999999" fill="#f4f4f4" text-anchor="middle" font-size="8.3" transform="translate(578.20,0) scale(0.9,1) translate(-578.20,0)">0</text>
<text x="566.414" y="690.9" fill="#f4f4f4" text-anchor="end" font-size="7.2">P<tspan font-size="4.2" dy="1.6">Σ</tspan><tspan font-size="5" dy="-1.6">, МВт</tspan><tspan font-size="6.2"> =</tspan></text>
<text x="578.196" y="691.1999999999999" fill="#f4f4f4" text-anchor="middle" font-size="8.3" transform="translate(578.20,0) scale(0.9,1) translate(-578.20,0)">0</text>
<text x="566.414" y="702.9" fill="#f4f4f4" text-anchor="end" font-size="7.2">Q<tspan font-size="4.2" dy="1.6">Σ</tspan><tspan font-size="5" dy="-1.6">, Мвар</tspan><tspan font-size="6.2"> =</tspan></text>
<text x="578.196" y="703.1999999999999" fill="#f4f4f4" text-anchor="middle" font-size="8.3" transform="translate(578.20,0) scale(0.9,1) translate(-578.20,0)">0</text>
<rect x="633.7" y="642.4" width="59.39999999999998" height="16.899999999999977" fill="#a9dc9b" stroke="#66755f" stroke-width="0.8"/>
<text x="663.4000000000001" y="653.2499999999999" fill="#1d2a18" text-anchor="middle" font-size="6.6" font-weight="bold">РОФ1</text>
<rect x="636.0000000000001" y="668.5" width="54.8" height="41" fill="#646464"/>
<path d="M658.4000000000001,668.5 L668.4000000000001,668.5 L663.4000000000001,663.1 Z" fill="#646464"/>
<text x="666.4140000000001" y="678.9" fill="#f4f4f4" text-anchor="end" font-size="7.2">I<tspan font-size="4.2" dy="1.6">Σ</tspan><tspan font-size="5" dy="-1.6">, А</tspan><tspan font-size="6.2"> =</tspan></text>
<text x="678.1960000000001" y="679.1999999999999" fill="#f4f4f4" text-anchor="middle" font-size="8.3" transform="translate(678.20,0) scale(0.9,1) translate(-678.20,0)">0</text>
<text x="666.4140000000001" y="690.9" fill="#f4f4f4" text-anchor="end" font-size="7.2">P<tspan font-size="4.2" dy="1.6">Σ</tspan><tspan font-size="5" dy="-1.6">, МВт</tspan><tspan font-size="6.2"> =</tspan></text>
<text x="678.1960000000001" y="691.1999999999999" fill="#f4f4f4" text-anchor="middle" font-size="8.3" transform="translate(678.20,0) scale(0.9,1) translate(-678.20,0)">0</text>
<text x="666.4140000000001" y="702.9" fill="#f4f4f4" text-anchor="end" font-size="7.2">Q<tspan font-size="4.2" dy="1.6">Σ</tspan><tspan font-size="5" dy="-1.6">, Мвар</tspan><tspan font-size="6.2"> =</tspan></text>
<text x="678.1960000000001" y="703.1999999999999" fill="#f4f4f4" text-anchor="middle" font-size="8.3" transform="translate(678.20,0) scale(0.9,1) translate(-678.20,0)">0</text>
<rect x="693.1" y="642.4" width="60.10000000000002" height="16.899999999999977" fill="#a9dc9b" stroke="#66755f" stroke-width="0.8"/>
<text x="723.1500000000001" y="653.2499999999999" fill="#1d2a18" text-anchor="middle" font-size="6.6" font-weight="bold">ТГ2</text>
<rect x="695.7500000000001" y="668.5" width="54.8" height="41" fill="#646464"/>
<path d="M718.1500000000001,668.5 L728.1500000000001,668.5 L723.1500000000001,663.1 Z" fill="#646464"/>
<text x="726.1640000000001" y="678.9" fill="#f4f4f4" text-anchor="end" font-size="7.2">I<tspan font-size="4.2" dy="1.6">Σ</tspan><tspan font-size="5" dy="-1.6">, А</tspan><tspan font-size="6.2"> =</tspan></text>
<text x="737.9460000000001" y="679.1999999999999" fill="#f4f4f4" text-anchor="middle" font-size="8.3" transform="translate(737.95,0) scale(0.9,1) translate(-737.95,0)">1006.85</text>
<text x="726.1640000000001" y="690.9" fill="#f4f4f4" text-anchor="end" font-size="7.2">P<tspan font-size="4.2" dy="1.6">Σ</tspan><tspan font-size="5" dy="-1.6">, МВт</tspan><tspan font-size="6.2"> =</tspan></text>
<text x="737.9460000000001" y="691.1999999999999" fill="#f4f4f4" text-anchor="middle" font-size="8.3" transform="translate(737.95,0) scale(0.9,1) translate(-737.95,0)">10.878</text>
<text x="726.1640000000001" y="702.9" fill="#f4f4f4" text-anchor="end" font-size="7.2">Q<tspan font-size="4.2" dy="1.6">Σ</tspan><tspan font-size="5" dy="-1.6">, Мвар</tspan><tspan font-size="6.2"> =</tspan></text>
<text x="737.9460000000001" y="703.1999999999999" fill="#f4f4f4" text-anchor="middle" font-size="8.3" transform="translate(737.95,0) scale(0.9,1) translate(-737.95,0)">2.345</text>
<rect x="753.2" y="642.4" width="60.19999999999993" height="16.899999999999977" fill="#a9dc9b" stroke="#66755f" stroke-width="0.8"/>
<text x="783.3" y="653.2499999999999" fill="#1d2a18" text-anchor="middle" font-size="6.6" font-weight="bold">РОФ2</text>
<rect x="755.9" y="668.5" width="54.8" height="41" fill="#646464"/>
<path d="M778.3,668.5 L788.3,668.5 L783.3,663.1 Z" fill="#646464"/>
<text x="786.314" y="678.9" fill="#f4f4f4" text-anchor="end" font-size="7.2">I<tspan font-size="4.2" dy="1.6">Σ</tspan><tspan font-size="5" dy="-1.6">, А</tspan><tspan font-size="6.2"> =</tspan></text>
<text x="798.096" y="679.1999999999999" fill="#f4f4f4" text-anchor="middle" font-size="8.3" transform="translate(798.10,0) scale(0.9,1) translate(-798.10,0)">0</text>
<text x="786.314" y="690.9" fill="#f4f4f4" text-anchor="end" font-size="7.2">P<tspan font-size="4.2" dy="1.6">Σ</tspan><tspan font-size="5" dy="-1.6">, МВт</tspan><tspan font-size="6.2"> =</tspan></text>
<text x="798.096" y="691.1999999999999" fill="#f4f4f4" text-anchor="middle" font-size="8.3" transform="translate(798.10,0) scale(0.9,1) translate(-798.10,0)">0</text>
<text x="786.314" y="702.9" fill="#f4f4f4" text-anchor="end" font-size="7.2">Q<tspan font-size="4.2" dy="1.6">Σ</tspan><tspan font-size="5" dy="-1.6">, Мвар</tspan><tspan font-size="6.2"> =</tspan></text>
<text x="798.096" y="703.1999999999999" fill="#f4f4f4" text-anchor="middle" font-size="8.3" transform="translate(798.10,0) scale(0.9,1) translate(-798.10,0)">0</text>
<rect x="813.4" y="642.4" width="59.5" height="16.899999999999977" fill="#a9dc9b" stroke="#66755f" stroke-width="0.8"/>
<text x="843.15" y="653.2499999999999" fill="#1d2a18" text-anchor="middle" font-size="6.6" font-weight="bold">7ВА</text>
<rect x="815.75" y="668.5" width="54.8" height="41" fill="#646464"/>
<path d="M838.15,668.5 L848.15,668.5 L843.15,663.1 Z" fill="#646464"/>
<text x="846.164" y="678.9" fill="#f4f4f4" text-anchor="end" font-size="7.2">I<tspan font-size="4.2" dy="1.6">Σ</tspan><tspan font-size="5" dy="-1.6">, А</tspan><tspan font-size="6.2"> =</tspan></text>
<text x="857.946" y="679.1999999999999" fill="#f4f4f4" text-anchor="middle" font-size="8.3" transform="translate(857.95,0) scale(0.9,1) translate(-857.95,0)">0</text>
<text x="846.164" y="690.9" fill="#f4f4f4" text-anchor="end" font-size="7.2">P<tspan font-size="4.2" dy="1.6">Σ</tspan><tspan font-size="5" dy="-1.6">, МВт</tspan><tspan font-size="6.2"> =</tspan></text>
<text x="857.946" y="691.1999999999999" fill="#f4f4f4" text-anchor="middle" font-size="8.3" transform="translate(857.95,0) scale(0.9,1) translate(-857.95,0)">0</text>
<text x="846.164" y="702.9" fill="#f4f4f4" text-anchor="end" font-size="7.2">Q<tspan font-size="4.2" dy="1.6">Σ</tspan><tspan font-size="5" dy="-1.6">, Мвар</tspan><tspan font-size="6.2"> =</tspan></text>
<text x="857.946" y="703.1999999999999" fill="#f4f4f4" text-anchor="middle" font-size="8.3" transform="translate(857.95,0) scale(0.9,1) translate(-857.95,0)">0</text>
<rect x="872.9" y="642.4" width="59.700000000000045" height="16.899999999999977" fill="#a9dc9b" stroke="#66755f" stroke-width="0.8"/>
<text x="902.75" y="653.2499999999999" fill="#1d2a18" text-anchor="middle" font-size="6.6" font-weight="bold">Р23Ф</text>
<rect x="875.35" y="668.5" width="54.8" height="41" fill="#646464"/>
<path d="M897.75,668.5 L907.75,668.5 L902.75,663.1 Z" fill="#646464"/>
<text x="905.764" y="678.9" fill="#f4f4f4" text-anchor="end" font-size="7.2">I<tspan font-size="4.2" dy="1.6">Σ</tspan><tspan font-size="5" dy="-1.6">, А</tspan><tspan font-size="6.2"> =</tspan></text>
<text x="917.546" y="679.1999999999999" fill="#f4f4f4" text-anchor="middle" font-size="8.3" transform="translate(917.55,0) scale(0.9,1) translate(-917.55,0)">262.73</text>
<text x="905.764" y="690.9" fill="#f4f4f4" text-anchor="end" font-size="7.2">P<tspan font-size="4.2" dy="1.6">Σ</tspan><tspan font-size="5" dy="-1.6">, МВт</tspan><tspan font-size="6.2"> =</tspan></text>
<text x="917.546" y="691.1999999999999" fill="#f4f4f4" text-anchor="middle" font-size="8.3" transform="translate(917.55,0) scale(0.9,1) translate(-917.55,0)">2.263</text>
<text x="905.764" y="702.9" fill="#f4f4f4" text-anchor="end" font-size="7.2">Q<tspan font-size="4.2" dy="1.6">Σ</tspan><tspan font-size="5" dy="-1.6">, Мвар</tspan><tspan font-size="6.2"> =</tspan></text>
<text x="917.546" y="703.1999999999999" fill="#f4f4f4" text-anchor="middle" font-size="8.3" transform="translate(917.55,0) scale(0.9,1) translate(-917.55,0)">1.735</text>
<rect x="932.6" y="642.4" width="58.89999999999998" height="16.899999999999977" fill="#a9dc9b" stroke="#66755f" stroke-width="0.8"/>
<text x="962.05" y="653.2499999999999" fill="#1d2a18" text-anchor="middle" font-size="6.6" font-weight="bold">ТГ1</text>
<rect x="934.65" y="668.5" width="54.8" height="41" fill="#646464"/>
<path d="M957.05,668.5 L967.05,668.5 L962.05,663.1 Z" fill="#646464"/>
<text x="965.064" y="678.9" fill="#f4f4f4" text-anchor="end" font-size="7.2">I<tspan font-size="4.2" dy="1.6">Σ</tspan><tspan font-size="5" dy="-1.6">, А</tspan><tspan font-size="6.2"> =</tspan></text>
<text x="976.846" y="679.1999999999999" fill="#f4f4f4" text-anchor="middle" font-size="8.3" transform="translate(976.85,0) scale(0.9,1) translate(-976.85,0)">886.41</text>
<text x="965.064" y="690.9" fill="#f4f4f4" text-anchor="end" font-size="7.2">P<tspan font-size="4.2" dy="1.6">Σ</tspan><tspan font-size="5" dy="-1.6">, МВт</tspan><tspan font-size="6.2"> =</tspan></text>
<text x="976.846" y="691.1999999999999" fill="#f4f4f4" text-anchor="middle" font-size="8.3" transform="translate(976.85,0) scale(0.9,1) translate(-976.85,0)">9.48</text>
<text x="965.064" y="702.9" fill="#f4f4f4" text-anchor="end" font-size="7.2">Q<tspan font-size="4.2" dy="1.6">Σ</tspan><tspan font-size="5" dy="-1.6">, Мвар</tspan><tspan font-size="6.2"> =</tspan></text>
<text x="976.846" y="703.1999999999999" fill="#f4f4f4" text-anchor="middle" font-size="8.3" transform="translate(976.85,0) scale(0.9,1) translate(-976.85,0)">2.193</text>
<rect x="65.5" y="364.6" width="61.5" height="17.0" fill="#a9dc9b" stroke="#66755f" stroke-width="0.8"/>
<text x="96.25" y="375.5" fill="#1d2a18" text-anchor="middle" font-size="6.6" font-weight="bold">ТР64Т</text>
<rect x="68.8" y="313.8" width="55" height="40.8" fill="#646464"/>
<path d="M91.3,354.6 L101.3,354.6 L96.3,360.0 Z" fill="#646464"/>
<text x="99.325" y="324.2" fill="#f4f4f4" text-anchor="end" font-size="7.2">I<tspan font-size="4.2" dy="1.6">Σ</tspan><tspan font-size="5" dy="-1.6">, А</tspan><tspan font-size="6.2"> =</tspan></text>
<text x="111.15" y="324.5" fill="#f4f4f4" text-anchor="middle" font-size="8.3" transform="translate(111.15,0) scale(0.9,1) translate(-111.15,0)">35.99</text>
<text x="99.325" y="336.2" fill="#f4f4f4" text-anchor="end" font-size="7.2">P<tspan font-size="4.2" dy="1.6">Σ</tspan><tspan font-size="5" dy="-1.6">, МВт</tspan><tspan font-size="6.2"> =</tspan></text>
<text x="111.15" y="336.5" fill="#f4f4f4" text-anchor="middle" font-size="8.3" transform="translate(111.15,0) scale(0.9,1) translate(-111.15,0)">0.362</text>
<text x="99.325" y="348.2" fill="#f4f4f4" text-anchor="end" font-size="7.2">Q<tspan font-size="4.2" dy="1.6">Σ</tspan><tspan font-size="5" dy="-1.6">, Мвар</tspan><tspan font-size="6.2"> =</tspan></text>
<text x="111.15" y="348.5" fill="#f4f4f4" text-anchor="middle" font-size="8.3" transform="translate(111.15,0) scale(0.9,1) translate(-111.15,0)">0.127</text>
<rect x="1116.4" y="365.40000000000003" width="61.5" height="17.0" fill="#a9dc9b" stroke="#66755f" stroke-width="0.8"/>
<text x="1147.15" y="376.3" fill="#1d2a18" text-anchor="middle" font-size="6.6" font-weight="bold">ТР65Т</text>
<rect x="1119.7" y="314.6" width="55" height="40.8" fill="#646464"/>
<path d="M1142.2,355.40000000000003 L1152.2,355.40000000000003 L1147.2,360.8 Z" fill="#646464"/>
<text x="1150.2250000000001" y="325.0" fill="#f4f4f4" text-anchor="end" font-size="7.2">I<tspan font-size="4.2" dy="1.6">Σ</tspan><tspan font-size="5" dy="-1.6">, А</tspan><tspan font-size="6.2"> =</tspan></text>
<text x="1162.05" y="325.3" fill="#f4f4f4" text-anchor="middle" font-size="8.3" transform="translate(1162.05,0) scale(0.9,1) translate(-1162.05,0)">1.2</text>
<text x="1150.2250000000001" y="337.0" fill="#f4f4f4" text-anchor="end" font-size="7.2">P<tspan font-size="4.2" dy="1.6">Σ</tspan><tspan font-size="5" dy="-1.6">, МВт</tspan><tspan font-size="6.2"> =</tspan></text>
<text x="1162.05" y="337.3" fill="#f4f4f4" text-anchor="middle" font-size="8.3" transform="translate(1162.05,0) scale(0.9,1) translate(-1162.05,0)">0.005</text>
<text x="1150.2250000000001" y="349.0" fill="#f4f4f4" text-anchor="end" font-size="7.2">Q<tspan font-size="4.2" dy="1.6">Σ</tspan><tspan font-size="5" dy="-1.6">, Мвар</tspan><tspan font-size="6.2"> =</tspan></text>
<text x="1162.05" y="349.3" fill="#f4f4f4" text-anchor="middle" font-size="8.3" transform="translate(1162.05,0) scale(0.9,1) translate(-1162.05,0)">0.005</text>
<rect x="220.4" y="385" width="75" height="50.3" fill="#646464"/>
<path d="M250.89999999999998,435.3 L264.9,435.3 L257.9,442.90000000000003 Z" fill="#646464"/>
<text x="234.9" y="395.2" fill="#f4f4f4" font-size="7.4">U<tspan font-size="3.6" dy="1.8">AB,</tspan><tspan font-size="4.2" dy="-1.8">кВ</tspan></text>
<text x="260.7" y="395.2" fill="#f4f4f4" text-anchor="middle" font-size="7">=</text>
<text x="277.4" y="395.4" fill="#f4f4f4" text-anchor="middle" font-size="8.2" transform="translate(277.40,0) scale(0.92,1) translate(-277.40,0)">6.304</text>
<text x="234.9" y="405.75" fill="#f4f4f4" font-size="7.4">U<tspan font-size="3.6" dy="1.8">BC,</tspan><tspan font-size="4.2" dy="-1.8">кВ</tspan></text>
<text x="260.7" y="405.75" fill="#f4f4f4" text-anchor="middle" font-size="7">=</text>
<text x="277.4" y="405.95" fill="#f4f4f4" text-anchor="middle" font-size="8.2" transform="translate(277.40,0) scale(0.92,1) translate(-277.40,0)">6.297</text>
<text x="234.9" y="416.3" fill="#f4f4f4" font-size="7.4">U<tspan font-size="3.6" dy="1.8">CA,</tspan><tspan font-size="4.2" dy="-1.8">кВ</tspan></text>
<text x="260.7" y="416.3" fill="#f4f4f4" text-anchor="middle" font-size="7">=</text>
<text x="277.4" y="416.5" fill="#f4f4f4" text-anchor="middle" font-size="8.2" transform="translate(277.40,0) scale(0.92,1) translate(-277.40,0)">6.292</text>
<text x="234.9" y="426.84999999999997" fill="#f4f4f4" font-size="7.4">U<tspan font-size="3.6" dy="1.8">Avg,</tspan><tspan font-size="4.2" dy="-1.8">кВ</tspan></text>
<text x="260.7" y="426.84999999999997" fill="#f4f4f4" text-anchor="middle" font-size="7">=</text>
<text x="277.4" y="427.04999999999995" fill="#f4f4f4" text-anchor="middle" font-size="8.2" transform="translate(277.40,0) scale(0.92,1) translate(-277.40,0)">6.298</text>
<rect x="985" y="507" width="75" height="50.3" fill="#646464"/>
<path d="M1015.5,507 L1029.5,507 L1022.5,499.4 Z" fill="#646464"/>
<text x="999.5" y="517.2" fill="#f4f4f4" font-size="7.4">U<tspan font-size="3.6" dy="1.8">AB,</tspan><tspan font-size="4.2" dy="-1.8">кВ</tspan></text>
<text x="1025.3" y="517.2" fill="#f4f4f4" text-anchor="middle" font-size="7">=</text>
<text x="1042" y="517.4000000000001" fill="#f4f4f4" text-anchor="middle" font-size="8.2" transform="translate(1042.00,0) scale(0.92,1) translate(-1042.00,0)">6.296</text>
<text x="999.5" y="527.75" fill="#f4f4f4" font-size="7.4">U<tspan font-size="3.6" dy="1.8">BC,</tspan><tspan font-size="4.2" dy="-1.8">кВ</tspan></text>
<text x="1025.3" y="527.75" fill="#f4f4f4" text-anchor="middle" font-size="7">=</text>
<text x="1042" y="527.95" fill="#f4f4f4" text-anchor="middle" font-size="8.2" transform="translate(1042.00,0) scale(0.92,1) translate(-1042.00,0)">6.29</text>
<text x="999.5" y="538.3000000000001" fill="#f4f4f4" font-size="7.4">U<tspan font-size="3.6" dy="1.8">CA,</tspan><tspan font-size="4.2" dy="-1.8">кВ</tspan></text>
<text x="1025.3" y="538.3000000000001" fill="#f4f4f4" text-anchor="middle" font-size="7">=</text>
<text x="1042" y="538.5000000000001" fill="#f4f4f4" text-anchor="middle" font-size="8.2" transform="translate(1042.00,0) scale(0.92,1) translate(-1042.00,0)">6.283</text>
<text x="999.5" y="548.85" fill="#f4f4f4" font-size="7.4">U<tspan font-size="3.6" dy="1.8">Avg,</tspan><tspan font-size="4.2" dy="-1.8">кВ</tspan></text>
<text x="1025.3" y="548.85" fill="#f4f4f4" text-anchor="middle" font-size="7">=</text>
<text x="1042" y="549.0500000000001" fill="#f4f4f4" text-anchor="middle" font-size="8.2" transform="translate(1042.00,0) scale(0.92,1) translate(-1042.00,0)">6.29</text>
</svg>
</body></html>
